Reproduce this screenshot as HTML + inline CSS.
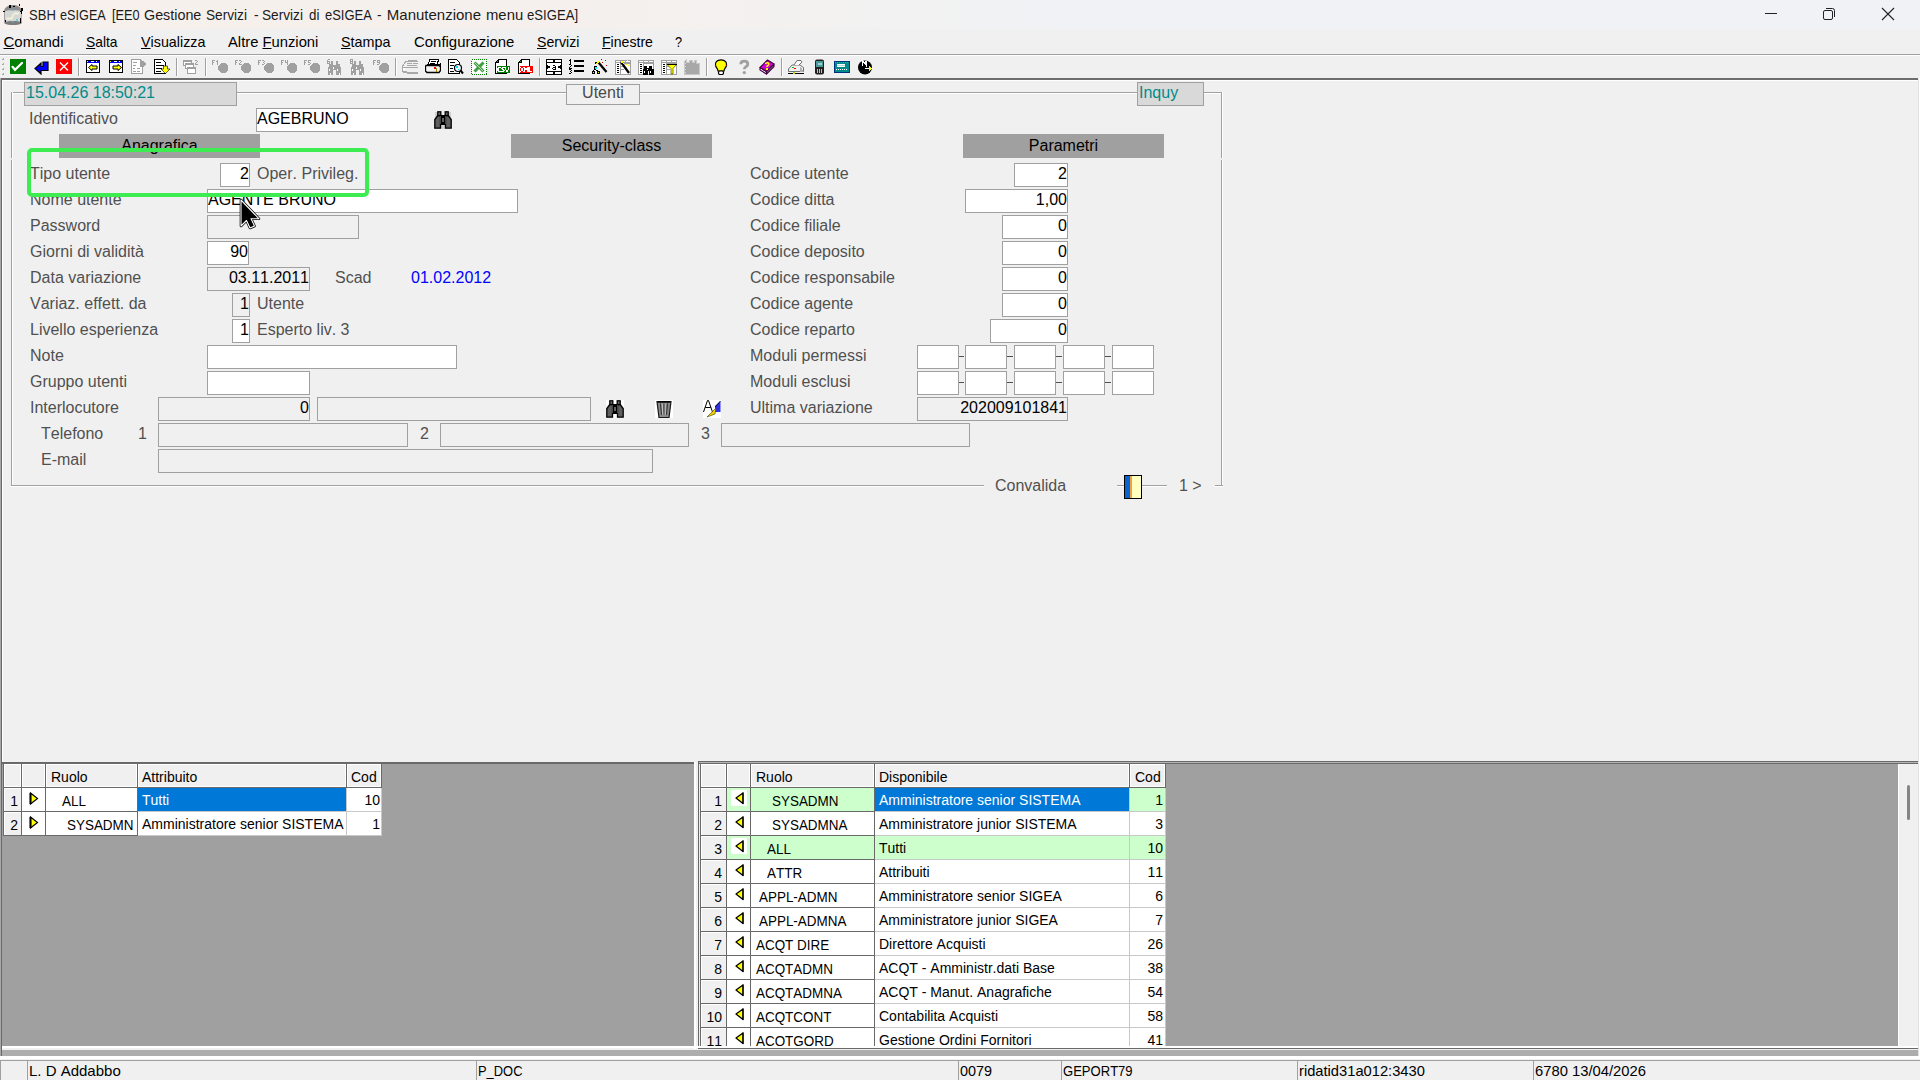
<!DOCTYPE html>
<html><head><meta charset="utf-8"><title>SBH eSIGEA</title>
<style>
html,body{margin:0;padding:0;}
body{width:1920px;height:1080px;overflow:hidden;position:relative;background:#f0f0f0;font-family:"Liberation Sans",sans-serif;}
.t{position:absolute;white-space:pre;line-height:normal;font-kerning:none;font-variant-ligatures:none;}
.b{position:absolute;box-sizing:border-box;}
u{text-decoration:underline;text-decoration-thickness:1px;text-underline-offset:1px;}
</style></head><body>
<div class="b" style="left:0;top:0;width:1920px;height:29px;background:linear-gradient(90deg,#f7f0ec 0%,#f5f0ed 30%,#f2f2f2 47%,#f1f2f6 58%,#f1f2f6 100%);"></div><svg class="b" style="left:2px;top:3px;" width="22" height="22" viewBox="0 0 22 22" shape-rendering="crispEdges"><g shape-rendering="geometricPrecision">
<path d="M2 8.5 C2.5 4.5 6 2 11 2 C16 2 19.5 4.5 20 8.5 V19.5 C19 22.5 3 22.5 2 19.5 Z" fill="#d6d6d6"/>
<path d="M2 8.5 C2.5 4.5 6 2 11 2 C16 2 19.5 4.5 20 8.5 C17 6.8 5 6.8 2 8.5 Z" fill="#8c8c8c"/>
<path d="M2.5 19 C7 17.5 15 17.5 19.5 19 V20.5 C15 22.5 7 22.5 2.5 20.5 Z" fill="#7c7c7c"/>
<path d="M2.5 9 V19" stroke="#a0a0a0" stroke-width="1"/><path d="M19.5 9 V19" stroke="#b0b0b0" stroke-width="1"/>
<path d="M12 10.5 H17 M11.5 11 L10 15 M4.5 15.5 H10.5" stroke="#f2f2d6" stroke-width="1.8" fill="none"/>
<rect x="9" y="6.5" width="3" height="1" fill="#4fb8c8"/><rect x="9" y="18.5" width="3" height="1" fill="#4fb8c8"/><rect x="14" y="16" width="2" height="2" fill="#7cc8d0"/>
</g><g fill="#000"><rect x="7" y="2" width="1.5" height="2.5"/><rect x="11" y="2.5" width="2" height="1.5"/><rect x="16.5" y="1" width="1.5" height="1.5"/><rect x="1" y="7.5" width="2" height="1.5"/><rect x="18" y="7.5" width="2" height="1.5"/><rect x="19" y="4.5" width="1.5" height="3"/><rect x="18.5" y="9" width="1.5" height="2"/><rect x="2.5" y="17" width="1.5" height="1.5"/><rect x="17.5" y="15" width="1.5" height="2.5"/><rect x="17.5" y="18" width="1.5" height="2"/></g></svg><div class="t " style="left:28.7px;top:6.42px;font-size:15px;color:#1b1b1b;transform:scaleX(0.87);transform-origin:0 0;">SBH</div><div class="t " style="left:60.199999999999996px;top:6.42px;font-size:15px;color:#1b1b1b;transform:scaleX(0.845);transform-origin:0 0;">eSIGEA</div><div class="t " style="left:112.0px;top:6.42px;font-size:15px;color:#1b1b1b;transform:scaleX(0.85);transform-origin:0 0;">[EE0</div><div class="t " style="left:143.5px;top:6.42px;font-size:15px;color:#1b1b1b;transform:scaleX(0.955);transform-origin:0 0;">Gestione</div><div class="t " style="left:206.0px;top:6.42px;font-size:15px;color:#1b1b1b;transform:scaleX(0.91);transform-origin:0 0;">Servizi</div><div class="t " style="left:253.70000000000002px;top:6.42px;font-size:15px;color:#1b1b1b;transform:scaleX(0.92);transform-origin:0 0;">-</div><div class="t " style="left:262.3px;top:6.42px;font-size:15px;color:#1b1b1b;transform:scaleX(0.91);transform-origin:0 0;">Servizi</div><div class="t " style="left:308.5px;top:6.42px;font-size:15px;color:#1b1b1b;transform:scaleX(0.89);transform-origin:0 0;">di</div><div class="t " style="left:325.1px;top:6.42px;font-size:15px;color:#1b1b1b;transform:scaleX(0.865);transform-origin:0 0;">eSIGEA</div><div class="t " style="left:377.3px;top:6.42px;font-size:15px;color:#1b1b1b;transform:scaleX(0.92);transform-origin:0 0;">-</div><div class="t " style="left:386.8px;top:6.42px;font-size:15px;color:#1b1b1b;transform:scaleX(1.0);transform-origin:0 0;">Manutenzione</div><div class="t " style="left:486.0px;top:6.42px;font-size:15px;color:#1b1b1b;transform:scaleX(0.99);transform-origin:0 0;">menu</div><div class="t " style="left:527.3px;top:6.42px;font-size:15px;color:#1b1b1b;transform:scaleX(0.875);transform-origin:0 0;">eSIGEA]</div><div class="b" style="left:1765px;top:13px;width:12px;height:1px;background:#222;"></div><svg class="b" style="left:1822px;top:7px;" width="14" height="14" viewBox="0 0 14 14" shape-rendering="crispEdges"><g shape-rendering="geometricPrecision" fill="none" stroke="#222" stroke-width="1"><rect x="1.5" y="3.5" width="9" height="9" rx="1.5"/><path d="M4 1.5 H10.5 Q12.5 1.5 12.5 3.5 V10"/></g></svg><svg class="b" style="left:1881px;top:7px;" width="14" height="14" viewBox="0 0 14 14" shape-rendering="crispEdges"><g shape-rendering="geometricPrecision" stroke="#222" stroke-width="1.1"><path d="M1 1 L13 13 M13 1 L1 13"/></g></svg><div class="t " style="left:3.5px;top:33.42px;font-size:15px;color:#000;transform:scaleX(1.0);transform-origin:0 0;"><u>C</u>omandi</div><div class="t " style="left:85.5px;top:33.42px;font-size:15px;color:#000;transform:scaleX(0.92);transform-origin:0 0;"><u>S</u>alta</div><div class="t " style="left:140.5px;top:33.42px;font-size:15px;color:#000;transform:scaleX(0.954);transform-origin:0 0;"><u>V</u>isualizza</div><div class="t " style="left:227.5px;top:33.42px;font-size:15px;color:#000;transform:scaleX(0.985);transform-origin:0 0;">Altre <u>F</u>unzioni</div><div class="t " style="left:340.5px;top:33.42px;font-size:15px;color:#000;transform:scaleX(0.955);transform-origin:0 0;"><u>S</u>tampa</div><div class="t " style="left:413.5px;top:33.42px;font-size:15px;color:#000;transform:scaleX(0.995);transform-origin:0 0;">Confi<u>g</u>urazione</div><div class="t " style="left:536.5px;top:33.42px;font-size:15px;color:#000;transform:scaleX(0.94);transform-origin:0 0;"><u>S</u>ervizi</div><div class="t " style="left:601.5px;top:33.42px;font-size:15px;color:#000;transform:scaleX(0.94);transform-origin:0 0;"><u>F</u>inestre</div><div class="t " style="left:674.5px;top:33.42px;font-size:15px;color:#000;transform:scaleX(0.85);transform-origin:0 0;">?</div><div class="b" style="left:0px;top:54px;width:1920px;height:1px;background:#a0a0a0;"></div><div class="b" style="left:0px;top:55px;width:1920px;height:1px;background:#ffffff;"></div><div class="b" style="left:3px;top:58px;width:1px;height:1px;background:#a8a8a8;"></div><div class="b" style="left:2px;top:59px;width:2px;height:1px;background:#a8a8a8;"></div><div class="b" style="left:3px;top:63px;width:1px;height:1px;background:#a8a8a8;"></div><div class="b" style="left:2px;top:64px;width:2px;height:1px;background:#a8a8a8;"></div><div class="b" style="left:3px;top:68px;width:1px;height:1px;background:#a8a8a8;"></div><div class="b" style="left:2px;top:69px;width:2px;height:1px;background:#a8a8a8;"></div><div class="b" style="left:3px;top:73px;width:1px;height:1px;background:#a8a8a8;"></div><div class="b" style="left:2px;top:74px;width:2px;height:1px;background:#a8a8a8;"></div><div class="b" style="left:78px;top:58px;width:1px;height:18px;background:#a0a0a0;"></div><div class="b" style="left:79px;top:58px;width:1px;height:18px;background:#ffffff;"></div><div class="b" style="left:176px;top:58px;width:1px;height:18px;background:#a0a0a0;"></div><div class="b" style="left:177px;top:58px;width:1px;height:18px;background:#ffffff;"></div><div class="b" style="left:205px;top:58px;width:1px;height:18px;background:#a0a0a0;"></div><div class="b" style="left:206px;top:58px;width:1px;height:18px;background:#ffffff;"></div><div class="b" style="left:395px;top:58px;width:1px;height:18px;background:#a0a0a0;"></div><div class="b" style="left:396px;top:58px;width:1px;height:18px;background:#ffffff;"></div><div class="b" style="left:539px;top:58px;width:1px;height:18px;background:#a0a0a0;"></div><div class="b" style="left:540px;top:58px;width:1px;height:18px;background:#ffffff;"></div><div class="b" style="left:706px;top:58px;width:1px;height:18px;background:#a0a0a0;"></div><div class="b" style="left:707px;top:58px;width:1px;height:18px;background:#ffffff;"></div><div class="b" style="left:781px;top:58px;width:1px;height:18px;background:#a0a0a0;"></div><div class="b" style="left:782px;top:58px;width:1px;height:18px;background:#ffffff;"></div><svg class="b" style="left:10px;top:59px;" width="16" height="16" viewBox="0 0 16 16" shape-rendering="crispEdges"><rect x="0" y="0" width="16" height="15" fill="#008000"/><path d="M2.5 7.8 L5 10.8 L12 4" stroke="#fff" stroke-width="2.2" fill="none" stroke-linecap="round" shape-rendering="geometricPrecision"/></svg><svg class="b" style="left:33px;top:59px;" width="16" height="16" viewBox="0 0 16 16" shape-rendering="crispEdges"><path d="M15 3 H10 V7.5 H8 V4 L2 9.5 L8 15 V11.5 H15 Z" fill="#0000ff" stroke="#000" stroke-width="1.2" stroke-linejoin="miter" shape-rendering="geometricPrecision"/></svg><svg class="b" style="left:56px;top:59px;" width="16" height="16" viewBox="0 0 16 16" shape-rendering="crispEdges"><rect x="0" y="0" width="16" height="15" fill="#ff0000"/><path d="M4 3.5 L12 11.5 M12 3.5 L4 11.5" stroke="#fff" stroke-width="1.4" shape-rendering="geometricPrecision"/></svg><svg class="b" style="left:85px;top:59px;" width="16" height="16" viewBox="0 0 16 16" shape-rendering="crispEdges"><rect x="1.5" y="1.5" width="13" height="12" fill="#fff" stroke="#000" stroke-width="1.3"/><rect x="2" y="2" width="12" height="2" fill="#0000ff"/><rect x="2" y="2" width="1" height="1" fill="#ffff00"/><rect x="6" y="2" width="3" height="1" fill="#fff"/><rect x="11" y="2" width="1" height="1" fill="#fff"/><path d="M3.5 8.5 L7 5.5 V7 H12 V10 H7 V11.5 Z" fill="#ffff00" stroke="#000" stroke-width="1" shape-rendering="geometricPrecision"/></svg><svg class="b" style="left:108px;top:59px;" width="16" height="16" viewBox="0 0 16 16" shape-rendering="crispEdges"><rect x="1.5" y="1.5" width="13" height="12" fill="#fff" stroke="#000" stroke-width="1.3"/><rect x="2" y="2" width="12" height="2" fill="#0000ff"/><rect x="2" y="2" width="1" height="1" fill="#ffff00"/><rect x="6" y="2" width="3" height="1" fill="#fff"/><rect x="11" y="2" width="1" height="1" fill="#fff"/><path d="M13.5 8.5 L10 5.5 V7 H5 V10 H10 V11.5 Z" fill="#ffff00" stroke="#000" stroke-width="1" shape-rendering="geometricPrecision"/></svg><svg class="b" style="left:131px;top:59px;" width="16" height="16" viewBox="0 0 16 16" shape-rendering="crispEdges"><path d="M0.5 0.5 H9 L11.5 3 V14.5 H0.5 Z" fill="#fff" stroke="#a0a0a0"/><path d="M2 3.5H6 M2 6.5H5 M2 9.5H4 M6 9.5H9 M2 12.5H5 M6 12.5H9" stroke="#a0a0a0"/><path d="M9 2 H12 L15.5 5 L12 8 H9 Z" fill="#a0a0a0"/></svg><svg class="b" style="left:154px;top:59px;" width="16" height="16" viewBox="0 0 16 16" shape-rendering="crispEdges"><path d="M0.5 0.5 H8.5 L11.5 3.5 V14.5 H0.5 Z" fill="#fff" stroke="#000" stroke-width="1.2"/><path d="M2 3.5H7 M2 6.5H10 M2 9.5H8 M2 12.5H7" stroke="#000"/><path d="M9.5 7 H13.5 V10 H16 L11.5 14.5 L7 10 H9.5 Z" fill="#ffff00" stroke="#000" stroke-width="0.6" shape-rendering="geometricPrecision"/></svg><svg class="b" style="left:183px;top:59px;" width="16" height="16" viewBox="0 0 16 16" shape-rendering="crispEdges"><g fill="#fff" stroke="#a0a0a0"><rect x="0.5" y="1.5" width="8" height="5"/><rect x="2.5" y="4.5" width="8" height="5"/><rect x="4.5" y="8.5" width="8" height="6"/></g><path d="M0.5 2.5H8.5 M2.5 5.5H10.5 M4.5 9.5H12.5" stroke="#a0a0a0"/><rect x="12" y="1" width="1" height="1" fill="#a0a0a0"/><rect x="13" y="1" width="1" height="1" fill="#a0a0a0"/><rect x="14" y="2" width="1" height="1" fill="#a0a0a0"/><rect x="13" y="3" width="1" height="1" fill="#a0a0a0"/><rect x="12" y="4" width="1" height="1" fill="#a0a0a0"/><rect x="12" y="5" width="1" height="1" fill="#a0a0a0"/><rect x="13" y="5" width="1" height="1" fill="#a0a0a0"/><rect x="14" y="5" width="1" height="1" fill="#a0a0a0"/></svg><svg class="b" style="left:212px;top:59px;" width="16" height="16" viewBox="0 0 16 16" shape-rendering="crispEdges"><rect x="0" y="1" width="1" height="1" fill="#a0a0a0"/><rect x="1" y="1" width="1" height="1" fill="#a0a0a0"/><rect x="2" y="1" width="1" height="1" fill="#a0a0a0"/><rect x="0" y="2" width="1" height="1" fill="#a0a0a0"/><rect x="0" y="3" width="1" height="1" fill="#a0a0a0"/><rect x="1" y="3" width="1" height="1" fill="#a0a0a0"/><rect x="0" y="4" width="1" height="1" fill="#a0a0a0"/><rect x="0" y="5" width="1" height="1" fill="#a0a0a0"/><rect x="5" y="1" width="1" height="1" fill="#a0a0a0"/><rect x="4" y="2" width="1" height="1" fill="#a0a0a0"/><rect x="5" y="2" width="1" height="1" fill="#a0a0a0"/><rect x="5" y="3" width="1" height="1" fill="#a0a0a0"/><rect x="5" y="4" width="1" height="1" fill="#a0a0a0"/><rect x="5" y="5" width="1" height="1" fill="#a0a0a0"/><path d="M9 4 H13 L16 7 V11 L13 14 H9 L6 11 V7 Z" fill="#a0a0a0"/></svg><svg class="b" style="left:235px;top:59px;" width="16" height="16" viewBox="0 0 16 16" shape-rendering="crispEdges"><rect x="0" y="1" width="1" height="1" fill="#a0a0a0"/><rect x="1" y="1" width="1" height="1" fill="#a0a0a0"/><rect x="2" y="1" width="1" height="1" fill="#a0a0a0"/><rect x="0" y="2" width="1" height="1" fill="#a0a0a0"/><rect x="0" y="3" width="1" height="1" fill="#a0a0a0"/><rect x="1" y="3" width="1" height="1" fill="#a0a0a0"/><rect x="0" y="4" width="1" height="1" fill="#a0a0a0"/><rect x="0" y="5" width="1" height="1" fill="#a0a0a0"/><rect x="4" y="1" width="1" height="1" fill="#a0a0a0"/><rect x="5" y="1" width="1" height="1" fill="#a0a0a0"/><rect x="6" y="2" width="1" height="1" fill="#a0a0a0"/><rect x="5" y="3" width="1" height="1" fill="#a0a0a0"/><rect x="4" y="4" width="1" height="1" fill="#a0a0a0"/><rect x="4" y="5" width="1" height="1" fill="#a0a0a0"/><rect x="5" y="5" width="1" height="1" fill="#a0a0a0"/><rect x="6" y="5" width="1" height="1" fill="#a0a0a0"/><path d="M9 4 H13 L16 7 V11 L13 14 H9 L6 11 V7 Z" fill="#a0a0a0"/></svg><svg class="b" style="left:258px;top:59px;" width="16" height="16" viewBox="0 0 16 16" shape-rendering="crispEdges"><rect x="0" y="1" width="1" height="1" fill="#a0a0a0"/><rect x="1" y="1" width="1" height="1" fill="#a0a0a0"/><rect x="2" y="1" width="1" height="1" fill="#a0a0a0"/><rect x="0" y="2" width="1" height="1" fill="#a0a0a0"/><rect x="0" y="3" width="1" height="1" fill="#a0a0a0"/><rect x="1" y="3" width="1" height="1" fill="#a0a0a0"/><rect x="0" y="4" width="1" height="1" fill="#a0a0a0"/><rect x="0" y="5" width="1" height="1" fill="#a0a0a0"/><rect x="4" y="1" width="1" height="1" fill="#a0a0a0"/><rect x="5" y="1" width="1" height="1" fill="#a0a0a0"/><rect x="6" y="2" width="1" height="1" fill="#a0a0a0"/><rect x="5" y="3" width="1" height="1" fill="#a0a0a0"/><rect x="6" y="4" width="1" height="1" fill="#a0a0a0"/><rect x="4" y="5" width="1" height="1" fill="#a0a0a0"/><rect x="5" y="5" width="1" height="1" fill="#a0a0a0"/><path d="M9 4 H13 L16 7 V11 L13 14 H9 L6 11 V7 Z" fill="#a0a0a0"/></svg><svg class="b" style="left:281px;top:59px;" width="16" height="16" viewBox="0 0 16 16" shape-rendering="crispEdges"><rect x="0" y="1" width="1" height="1" fill="#a0a0a0"/><rect x="1" y="1" width="1" height="1" fill="#a0a0a0"/><rect x="2" y="1" width="1" height="1" fill="#a0a0a0"/><rect x="0" y="2" width="1" height="1" fill="#a0a0a0"/><rect x="0" y="3" width="1" height="1" fill="#a0a0a0"/><rect x="1" y="3" width="1" height="1" fill="#a0a0a0"/><rect x="0" y="4" width="1" height="1" fill="#a0a0a0"/><rect x="0" y="5" width="1" height="1" fill="#a0a0a0"/><rect x="4" y="1" width="1" height="1" fill="#a0a0a0"/><rect x="6" y="1" width="1" height="1" fill="#a0a0a0"/><rect x="4" y="2" width="1" height="1" fill="#a0a0a0"/><rect x="6" y="2" width="1" height="1" fill="#a0a0a0"/><rect x="4" y="3" width="1" height="1" fill="#a0a0a0"/><rect x="5" y="3" width="1" height="1" fill="#a0a0a0"/><rect x="6" y="3" width="1" height="1" fill="#a0a0a0"/><rect x="6" y="4" width="1" height="1" fill="#a0a0a0"/><rect x="6" y="5" width="1" height="1" fill="#a0a0a0"/><path d="M9 4 H13 L16 7 V11 L13 14 H9 L6 11 V7 Z" fill="#a0a0a0"/></svg><svg class="b" style="left:304px;top:59px;" width="16" height="16" viewBox="0 0 16 16" shape-rendering="crispEdges"><rect x="0" y="1" width="1" height="1" fill="#a0a0a0"/><rect x="1" y="1" width="1" height="1" fill="#a0a0a0"/><rect x="2" y="1" width="1" height="1" fill="#a0a0a0"/><rect x="0" y="2" width="1" height="1" fill="#a0a0a0"/><rect x="0" y="3" width="1" height="1" fill="#a0a0a0"/><rect x="1" y="3" width="1" height="1" fill="#a0a0a0"/><rect x="0" y="4" width="1" height="1" fill="#a0a0a0"/><rect x="0" y="5" width="1" height="1" fill="#a0a0a0"/><rect x="4" y="1" width="1" height="1" fill="#a0a0a0"/><rect x="5" y="1" width="1" height="1" fill="#a0a0a0"/><rect x="6" y="1" width="1" height="1" fill="#a0a0a0"/><rect x="4" y="2" width="1" height="1" fill="#a0a0a0"/><rect x="4" y="3" width="1" height="1" fill="#a0a0a0"/><rect x="5" y="3" width="1" height="1" fill="#a0a0a0"/><rect x="6" y="4" width="1" height="1" fill="#a0a0a0"/><rect x="4" y="5" width="1" height="1" fill="#a0a0a0"/><rect x="5" y="5" width="1" height="1" fill="#a0a0a0"/><path d="M9 4 H13 L16 7 V11 L13 14 H9 L6 11 V7 Z" fill="#a0a0a0"/></svg><svg class="b" style="left:373px;top:59px;" width="16" height="16" viewBox="0 0 16 16" shape-rendering="crispEdges"><rect x="0" y="1" width="1" height="1" fill="#a0a0a0"/><rect x="1" y="1" width="1" height="1" fill="#a0a0a0"/><rect x="2" y="1" width="1" height="1" fill="#a0a0a0"/><rect x="0" y="2" width="1" height="1" fill="#a0a0a0"/><rect x="0" y="3" width="1" height="1" fill="#a0a0a0"/><rect x="1" y="3" width="1" height="1" fill="#a0a0a0"/><rect x="0" y="4" width="1" height="1" fill="#a0a0a0"/><rect x="0" y="5" width="1" height="1" fill="#a0a0a0"/><rect x="4" y="1" width="1" height="1" fill="#a0a0a0"/><rect x="5" y="1" width="1" height="1" fill="#a0a0a0"/><rect x="6" y="1" width="1" height="1" fill="#a0a0a0"/><rect x="4" y="2" width="1" height="1" fill="#a0a0a0"/><rect x="6" y="2" width="1" height="1" fill="#a0a0a0"/><rect x="4" y="3" width="1" height="1" fill="#a0a0a0"/><rect x="5" y="3" width="1" height="1" fill="#a0a0a0"/><rect x="6" y="3" width="1" height="1" fill="#a0a0a0"/><rect x="6" y="4" width="1" height="1" fill="#a0a0a0"/><rect x="4" y="5" width="1" height="1" fill="#a0a0a0"/><rect x="5" y="5" width="1" height="1" fill="#a0a0a0"/><path d="M9 4 H13 L16 7 V11 L13 14 H9 L6 11 V7 Z" fill="#a0a0a0"/></svg><svg class="b" style="left:327px;top:59px;" width="16" height="16" viewBox="0 0 16 16" shape-rendering="crispEdges"><rect x="1" y="0" width="1" height="1" fill="#a0a0a0"/><rect x="2" y="0" width="1" height="1" fill="#a0a0a0"/><rect x="0" y="1" width="1" height="1" fill="#a0a0a0"/><rect x="0" y="2" width="1" height="1" fill="#a0a0a0"/><rect x="1" y="2" width="1" height="1" fill="#a0a0a0"/><rect x="2" y="2" width="1" height="1" fill="#a0a0a0"/><rect x="0" y="3" width="1" height="1" fill="#a0a0a0"/><rect x="2" y="3" width="1" height="1" fill="#a0a0a0"/><rect x="0" y="4" width="1" height="1" fill="#a0a0a0"/><rect x="1" y="4" width="1" height="1" fill="#a0a0a0"/><rect x="2" y="4" width="1" height="1" fill="#a0a0a0"/><g fill="#a0a0a0"><rect x="1" y="8" width="5" height="8"/><rect x="2" y="5" width="4" height="3"/><rect x="4" y="2" width="2" height="3"/><rect x="9" y="8" width="5" height="8"/><rect x="9" y="5" width="4" height="3"/><rect x="9" y="2" width="2" height="3"/><rect x="6" y="6" width="3" height="5"/></g><g fill="#fff"><rect x="2" y="10" width="1" height="2"/><rect x="6" y="8" width="1" height="2"/><rect x="10" y="10" width="1" height="2"/><rect x="3" y="14" width="1" height="2"/><rect x="12" y="14" width="1" height="2"/><rect x="5" y="3" width="0" height="0"/></g></svg><svg class="b" style="left:350px;top:59px;" width="16" height="16" viewBox="0 0 16 16" shape-rendering="crispEdges"><rect x="0" y="0" width="1" height="1" fill="#a0a0a0"/><rect x="1" y="0" width="1" height="1" fill="#a0a0a0"/><rect x="2" y="0" width="1" height="1" fill="#a0a0a0"/><rect x="0" y="1" width="1" height="1" fill="#a0a0a0"/><rect x="2" y="1" width="1" height="1" fill="#a0a0a0"/><rect x="0" y="2" width="1" height="1" fill="#a0a0a0"/><rect x="1" y="2" width="1" height="1" fill="#a0a0a0"/><rect x="2" y="2" width="1" height="1" fill="#a0a0a0"/><rect x="0" y="3" width="1" height="1" fill="#a0a0a0"/><rect x="2" y="3" width="1" height="1" fill="#a0a0a0"/><rect x="0" y="4" width="1" height="1" fill="#a0a0a0"/><rect x="1" y="4" width="1" height="1" fill="#a0a0a0"/><rect x="2" y="4" width="1" height="1" fill="#a0a0a0"/><g fill="#a0a0a0"><rect x="1" y="8" width="5" height="8"/><rect x="2" y="5" width="4" height="3"/><rect x="4" y="2" width="2" height="3"/><rect x="9" y="8" width="5" height="8"/><rect x="9" y="5" width="4" height="3"/><rect x="9" y="2" width="2" height="3"/><rect x="6" y="6" width="3" height="5"/></g><g fill="#fff"><rect x="2" y="10" width="1" height="2"/><rect x="6" y="8" width="1" height="2"/><rect x="10" y="10" width="1" height="2"/><rect x="3" y="14" width="1" height="2"/><rect x="12" y="14" width="1" height="2"/><rect x="5" y="3" width="0" height="0"/></g></svg><svg class="b" style="left:402px;top:59px;" width="16" height="16" viewBox="0 0 16 16" shape-rendering="crispEdges"><path d="M0 8 L4 2 H16" fill="none" stroke="#a8a8a8"/><g fill="#a8a8a8"><rect x="6" y="1" width="9" height="1"/><rect x="5" y="4" width="5" height="1"/><rect x="11" y="4" width="5" height="1"/><rect x="5" y="6" width="10" height="1"/><rect x="0" y="8" width="8" height="1"/><rect x="0" y="9" width="1" height="4"/><rect x="1" y="12" width="4" height="2"/><rect x="5" y="13" width="11" height="2"/><rect x="8" y="8" width="8" height="1"/></g><rect x="1" y="9" width="2" height="2" fill="#fff"/></svg><svg class="b" style="left:425px;top:59px;" width="16" height="16" viewBox="0 0 16 16" shape-rendering="crispEdges"><path d="M5 0.5 H13.5 L12 5.5 H3 Z" fill="#fff" stroke="#000" stroke-width="1.2"/><path d="M6 2.5H11 M5 4.5H10" stroke="#000"/><path d="M1 6.5 H14 L15.5 8 V11.5 L14 13.5 H2 L0.5 12 V7.5 Z" fill="#f4f4f4" stroke="#000" stroke-width="1.3" shape-rendering="geometricPrecision"/><rect x="9" y="8" width="2" height="2" fill="#f00"/><rect x="11" y="9" width="1" height="4" fill="#998800"/><path d="M12 6.5 L15 5 V8" fill="none" stroke="#000"/></svg><svg class="b" style="left:448px;top:59px;" width="16" height="16" viewBox="0 0 16 16" shape-rendering="crispEdges"><path d="M0.5 0.5 H8.5 L11.5 3.5 V14.5 H0.5 Z" fill="#fff" stroke="#000" stroke-width="1.2"/><path d="M2 3.5H7 M2 6.5H6 M2 9.5H5 M2 12.5H6" stroke="#000"/><circle cx="10" cy="9" r="3.5" fill="#f4fcfc" stroke="#000" stroke-width="1.2" shape-rendering="geometricPrecision"/><rect x="8" y="7" width="2" height="2" fill="#00e0ff"/><rect x="10" y="10" width="1" height="1" fill="#00e0ff"/><path d="M12.5 11.5 L15 14.5" stroke="#000" stroke-width="2" shape-rendering="geometricPrecision"/></svg><svg class="b" style="left:471px;top:59px;" width="16" height="16" viewBox="0 0 16 16" shape-rendering="crispEdges"><rect x="0.5" y="0.5" width="15" height="15" fill="#fff" stroke="#008000" stroke-dasharray="1 1"/><path d="M3.5 3.5 L12.5 12.5 M12.5 3.5 L3.5 12.5" stroke="#3f9f3f" stroke-width="3" shape-rendering="geometricPrecision"/><path d="M4 4 L12 12" stroke="#d8f0d8" stroke-width="0.8" shape-rendering="geometricPrecision"/></svg><svg class="b" style="left:494px;top:59px;" width="16" height="16" viewBox="0 0 16 16" shape-rendering="crispEdges"><path d="M4.5 0.5 H12.5 V14.5 H1.5 V3.5 Z" fill="#fff" stroke="#000" stroke-width="1.2"/><path d="M1.5 3.5 H4.5 V0.5" fill="none" stroke="#000"/><rect x="3" y="2" width="1" height="1" fill="#0a0"/><rect x="3" y="7" width="13" height="7" fill="#008000"/><rect x="4" y="8" width="1" height="1" fill="#fff"/><rect x="5" y="8" width="1" height="1" fill="#fff"/><rect x="6" y="8" width="1" height="1" fill="#fff"/><rect x="3" y="9" width="1" height="1" fill="#fff"/><rect x="4" y="9" width="1" height="1" fill="#fff"/><rect x="3" y="10" width="1" height="1" fill="#fff"/><rect x="4" y="10" width="1" height="1" fill="#fff"/><rect x="3" y="11" width="1" height="1" fill="#fff"/><rect x="4" y="11" width="1" height="1" fill="#fff"/><rect x="4" y="12" width="1" height="1" fill="#fff"/><rect x="5" y="12" width="1" height="1" fill="#fff"/><rect x="6" y="12" width="1" height="1" fill="#fff"/><rect x="8" y="8" width="1" height="1" fill="#fff"/><rect x="9" y="8" width="1" height="1" fill="#fff"/><rect x="10" y="8" width="1" height="1" fill="#fff"/><rect x="7" y="9" width="1" height="1" fill="#fff"/><rect x="8" y="9" width="1" height="1" fill="#fff"/><rect x="8" y="10" width="1" height="1" fill="#fff"/><rect x="9" y="10" width="1" height="1" fill="#fff"/><rect x="9" y="11" width="1" height="1" fill="#fff"/><rect x="10" y="11" width="1" height="1" fill="#fff"/><rect x="7" y="12" width="1" height="1" fill="#fff"/><rect x="8" y="12" width="1" height="1" fill="#fff"/><rect x="9" y="12" width="1" height="1" fill="#fff"/><rect x="11" y="8" width="1" height="1" fill="#fff"/><rect x="14" y="8" width="1" height="1" fill="#fff"/><rect x="11" y="9" width="1" height="1" fill="#fff"/><rect x="14" y="9" width="1" height="1" fill="#fff"/><rect x="11" y="10" width="1" height="1" fill="#fff"/><rect x="14" y="10" width="1" height="1" fill="#fff"/><rect x="12" y="11" width="1" height="1" fill="#fff"/><rect x="13" y="11" width="1" height="1" fill="#fff"/><rect x="12" y="12" width="1" height="1" fill="#fff"/><rect x="13" y="12" width="1" height="1" fill="#fff"/></svg><svg class="b" style="left:517px;top:59px;" width="16" height="16" viewBox="0 0 16 16" shape-rendering="crispEdges"><path d="M4.5 0.5 H12.5 V14.5 H1.5 V3.5 Z" fill="#fff" stroke="#000" stroke-width="1.2"/><path d="M1.5 3.5 H4.5 V0.5" fill="none" stroke="#000"/><rect x="3" y="2" width="1" height="1" fill="#0a0"/><rect x="3" y="7" width="13" height="7" fill="#ff0000"/><rect x="3" y="8" width="1" height="1" fill="#fff"/><rect x="6" y="8" width="1" height="1" fill="#fff"/><rect x="4" y="9" width="1" height="1" fill="#fff"/><rect x="5" y="9" width="1" height="1" fill="#fff"/><rect x="4" y="10" width="1" height="1" fill="#fff"/><rect x="5" y="10" width="1" height="1" fill="#fff"/><rect x="4" y="11" width="1" height="1" fill="#fff"/><rect x="5" y="11" width="1" height="1" fill="#fff"/><rect x="3" y="12" width="1" height="1" fill="#fff"/><rect x="6" y="12" width="1" height="1" fill="#fff"/><rect x="7" y="8" width="1" height="1" fill="#fff"/><rect x="10" y="8" width="1" height="1" fill="#fff"/><rect x="7" y="9" width="1" height="1" fill="#fff"/><rect x="8" y="9" width="1" height="1" fill="#fff"/><rect x="9" y="9" width="1" height="1" fill="#fff"/><rect x="10" y="9" width="1" height="1" fill="#fff"/><rect x="7" y="10" width="1" height="1" fill="#fff"/><rect x="8" y="10" width="1" height="1" fill="#fff"/><rect x="9" y="10" width="1" height="1" fill="#fff"/><rect x="10" y="10" width="1" height="1" fill="#fff"/><rect x="7" y="11" width="1" height="1" fill="#fff"/><rect x="10" y="11" width="1" height="1" fill="#fff"/><rect x="7" y="12" width="1" height="1" fill="#fff"/><rect x="10" y="12" width="1" height="1" fill="#fff"/><rect x="11" y="8" width="1" height="1" fill="#fff"/><rect x="12" y="8" width="1" height="1" fill="#fff"/><rect x="11" y="9" width="1" height="1" fill="#fff"/><rect x="12" y="9" width="1" height="1" fill="#fff"/><rect x="11" y="10" width="1" height="1" fill="#fff"/><rect x="12" y="10" width="1" height="1" fill="#fff"/><rect x="11" y="11" width="1" height="1" fill="#fff"/><rect x="12" y="11" width="1" height="1" fill="#fff"/><rect x="11" y="12" width="1" height="1" fill="#fff"/><rect x="12" y="12" width="1" height="1" fill="#fff"/><rect x="13" y="12" width="1" height="1" fill="#fff"/><rect x="14" y="12" width="1" height="1" fill="#fff"/></svg><svg class="b" style="left:546px;top:59px;" width="16" height="16" viewBox="0 0 16 16" shape-rendering="crispEdges"><rect x="0.5" y="0.5" width="15" height="15" fill="#fff" stroke="#000" stroke-width="1.3"/><path d="M0 3.5H16 M0 12.5H16 M8 0V3.5 M8 12.5V16" stroke="#000" stroke-width="1.3"/><path d="M1 8 H4 M12 8 H15" stroke="#000" stroke-width="1.6"/><path d="M1.5 6V10 M14.5 6V10" stroke="#000"/><rect x="7" y="6" width="1" height="1" fill="#000"/><rect x="8" y="6" width="1" height="1" fill="#000"/><rect x="9" y="7" width="1" height="1" fill="#000"/><rect x="7" y="8" width="1" height="1" fill="#000"/><rect x="8" y="8" width="1" height="1" fill="#000"/><rect x="9" y="8" width="1" height="1" fill="#000"/><rect x="6" y="9" width="1" height="1" fill="#000"/><rect x="9" y="9" width="1" height="1" fill="#000"/><rect x="7" y="10" width="1" height="1" fill="#000"/><rect x="8" y="10" width="1" height="1" fill="#000"/><rect x="9" y="10" width="1" height="1" fill="#000"/></svg><svg class="b" style="left:569px;top:59px;" width="16" height="16" viewBox="0 0 16 16" shape-rendering="crispEdges"><rect x="1" y="0" width="1" height="1" fill="#000"/><rect x="0" y="1" width="1" height="1" fill="#000"/><rect x="1" y="1" width="1" height="1" fill="#000"/><rect x="1" y="2" width="1" height="1" fill="#000"/><rect x="1" y="3" width="1" height="1" fill="#000"/><rect x="1" y="4" width="1" height="1" fill="#000"/><rect x="0" y="5" width="1" height="1" fill="#000"/><rect x="1" y="5" width="1" height="1" fill="#000"/><rect x="2" y="6" width="1" height="1" fill="#000"/><rect x="1" y="7" width="1" height="1" fill="#000"/><rect x="0" y="8" width="1" height="1" fill="#000"/><rect x="0" y="9" width="1" height="1" fill="#000"/><rect x="1" y="9" width="1" height="1" fill="#000"/><rect x="2" y="9" width="1" height="1" fill="#000"/><rect x="0" y="10" width="1" height="1" fill="#000"/><rect x="1" y="10" width="1" height="1" fill="#000"/><rect x="2" y="11" width="1" height="1" fill="#000"/><rect x="1" y="12" width="1" height="1" fill="#000"/><rect x="2" y="13" width="1" height="1" fill="#000"/><rect x="0" y="14" width="1" height="1" fill="#000"/><rect x="1" y="14" width="1" height="1" fill="#000"/><rect x="5" y="1" width="10" height="1.5" fill="#000"/><rect x="5" y="6" width="10" height="1.5" fill="#000"/><rect x="5" y="11" width="10" height="1.5" fill="#000"/></svg><svg class="b" style="left:592px;top:59px;" width="16" height="16" viewBox="0 0 16 16" shape-rendering="crispEdges"><path d="M6.5 3.5 L14.5 13" stroke="#000" stroke-width="2.2" shape-rendering="geometricPrecision"/><rect x="5" y="2" width="2" height="2" fill="#ff0"/><path d="M3 8 V10 L0.5 12.5 M3 10 L6 12.5" stroke="#000" fill="none"/><rect x="2" y="7" width="3" height="3" fill="#000"/><rect x="2.5" y="8" width="2" height="2" fill="#0ff"/><rect x="0" y="12" width="3" height="3" fill="#000"/><rect x="1" y="13" width="1" height="1" fill="#ff0"/><rect x="5" y="12" width="3" height="3" fill="#000"/><rect x="6" y="13" width="1" height="1" fill="#ff0"/><rect x="3" y="3" width="2" height="2" fill="#000"/><rect x="3.5" y="3.5" width="1" height="1" fill="#ff0"/><rect x="9" y="0" width="1" height="1" fill="#c00"/><rect x="13" y="1" width="1" height="1" fill="#c00"/><rect x="10" y="3" width="1" height="1" fill="#c00"/><rect x="14" y="6" width="1" height="1" fill="#c00"/></svg><svg class="b" style="left:615px;top:59px;" width="16" height="16" viewBox="0 0 16 16" shape-rendering="crispEdges"><rect x="0.5" y="1.5" width="15" height="14" fill="#fff" stroke="#a0a0a0"/><path d="M0 3.5H16 M5.5 2V16 M10.5 2V4" stroke="#a0a0a0"/><g fill="#000"><rect x="2" y="5" width="2" height="1"/><rect x="2" y="7" width="2" height="1"/><rect x="2" y="9" width="2" height="1"/><rect x="2" y="11" width="2" height="1"/><rect x="2" y="13" width="2" height="1"/></g><path d="M6 4.5H15 M6 7.5H9 M6 10.5H9" stroke="#a0a0a0"/><path d="M6 3 L14 14" stroke="#000" stroke-width="2.2" shape-rendering="geometricPrecision"/><rect x="6" y="2" width="2" height="2" fill="#ff0"/><rect x="8" y="4" width="1" height="1" fill="#ff0"/><rect x="12" y="0" width="1" height="2" fill="#ff0"/><rect x="10" y="5" width="2" height="1" fill="#ff0"/><rect x="13" y="6" width="1" height="1" fill="#ff0"/><rect x="14" y="5" width="1" height="1" fill="#ff0"/></svg><svg class="b" style="left:638px;top:59px;" width="16" height="16" viewBox="0 0 16 16" shape-rendering="crispEdges"><rect x="0.5" y="1.5" width="15" height="14" fill="#fff" stroke="#a0a0a0"/><path d="M0 3.5H16 M5.5 2V16 M10.5 2V4" stroke="#a0a0a0"/><g fill="#000"><rect x="2" y="5" width="2" height="1"/><rect x="2" y="7" width="2" height="1"/><rect x="2" y="9" width="2" height="1"/><rect x="2" y="11" width="2" height="1"/><rect x="2" y="13" width="2" height="1"/></g><path d="M6 4.5H15 M6 7.5H9 M6 10.5H9" stroke="#a0a0a0"/><g fill="#000"><rect x="5" y="10" width="5" height="6"/><rect x="6" y="7" width="3" height="3"/><rect x="11" y="10" width="5" height="6"/><rect x="11" y="7" width="3" height="3"/><rect x="8" y="9" width="4" height="3"/></g><g fill="#fff"><rect x="6" y="12" width="1" height="2"/><rect x="12" y="12" width="1" height="2"/><rect x="9" y="10" width="1" height="1"/></g></svg><svg class="b" style="left:661px;top:59px;" width="16" height="16" viewBox="0 0 16 16" shape-rendering="crispEdges"><rect x="0.5" y="1.5" width="15" height="14" fill="#fff" stroke="#a0a0a0"/><path d="M0 3.5H16 M5.5 2V16 M10.5 2V4" stroke="#a0a0a0"/><g fill="#000"><rect x="2" y="5" width="2" height="1"/><rect x="2" y="7" width="2" height="1"/><rect x="2" y="9" width="2" height="1"/><rect x="2" y="11" width="2" height="1"/><rect x="2" y="13" width="2" height="1"/></g><path d="M6 4.5H15 M6 7.5H9 M6 10.5H9" stroke="#a0a0a0"/><path d="M6 5.5 H15.5 L12 9.5 V15 H10 V9.5 Z" fill="#ffff00" stroke="#606000" stroke-width="0.8" shape-rendering="geometricPrecision"/><rect x="6" y="5" width="10" height="1" fill="#000"/></svg><svg class="b" style="left:684px;top:59px;" width="16" height="16" viewBox="0 0 16 16" shape-rendering="crispEdges"><path d="M0.5 15.5 V3 L2 1 V3 H5 V1 H8 V3 H10 V1 H12 V4 H15.5 V15.5 Z" fill="#a8a8a8" stroke="#c8c8c8"/><g fill="#d8d8d8"><rect x="1" y="4" width="1" height="1"/><rect x="1" y="7" width="1" height="1"/><rect x="1" y="10" width="1" height="1"/><rect x="1" y="13" width="1" height="1"/></g></svg><svg class="b" style="left:713px;top:59px;" width="16" height="16" viewBox="0 0 16 16" shape-rendering="crispEdges"><path d="M8 0.8 C3.5 0.8 2 4 2.5 6.5 C3 8.5 5 10 5 12 H11 C11 10 13 8.5 13.5 6.5 C14 4 12.5 0.8 8 0.8 Z" fill="#ffff00" stroke="#000" stroke-width="1.2" shape-rendering="geometricPrecision"/><rect x="5.5" y="12" width="5" height="3.5" rx="1.5" fill="#fff" stroke="#000" stroke-width="1.2" shape-rendering="geometricPrecision"/><rect x="2" y="6" width="1" height="1" fill="#c00"/><rect x="13" y="6" width="1" height="1" fill="#c00"/></svg><svg class="b" style="left:736px;top:59px;" width="16" height="16" viewBox="0 0 16 16" shape-rendering="crispEdges"><path d="M4.8 5.2 C4.8 1.2 11.8 1.2 11.8 5.2 C11.8 7.8 8.3 7.6 8.3 10.3" fill="none" stroke="#a0a0a0" stroke-width="2.8" shape-rendering="geometricPrecision"/><circle cx="8.3" cy="13.6" r="1.7" fill="#a0a0a0" shape-rendering="geometricPrecision"/></svg><svg class="b" style="left:759px;top:59px;" width="16" height="16" viewBox="0 0 16 16" shape-rendering="crispEdges"><g shape-rendering="geometricPrecision" stroke="#400040" stroke-width="1.1" stroke-linejoin="round"><path d="M1 8.5 L7.5 12.5 L7.5 15 L1 11 Z" fill="#fff"/><path d="M7.5 12.5 L15 5 L15 7.5 L7.5 15 Z" fill="#c8c8c8"/><path d="M1 8.5 L8.5 1 L15 5 L7.5 12.5 Z" fill="#d000d0"/></g><path d="M6.5 5 C7 3 10.5 3.5 9.8 5.5 C9.3 6.8 8 6.6 7.8 8" fill="none" stroke="#ffff00" stroke-width="1.5" shape-rendering="geometricPrecision"/><rect x="7" y="9" width="1.6" height="1.6" fill="#ff0"/></svg><svg class="b" style="left:788px;top:59px;" width="16" height="16" viewBox="0 0 16 16" shape-rendering="crispEdges"><path d="M0.5 10 L4 6 H12 L15.5 8.5 V12.5 H0.5 Z" fill="#f0f0f0" stroke="#707070" shape-rendering="geometricPrecision"/><path d="M12 7 V12.5 H15.5" fill="#b0b0b0"/><path d="M6 6 L9 1.5 H13 L14 3 L11 6" fill="#fff" stroke="#707070" shape-rendering="geometricPrecision"/><rect x="4" y="8" width="2" height="1" fill="#0c0"/><rect x="6" y="9" width="2" height="1" fill="#f00"/><rect x="0" y="14" width="16" height="1" fill="#000"/><rect x="5" y="13" width="2" height="2" fill="#cc0"/></svg><svg class="b" style="left:811px;top:59px;" width="16" height="16" viewBox="0 0 16 16" shape-rendering="crispEdges"><rect x="4" y="0.5" width="9" height="15" rx="2" fill="#202020" shape-rendering="geometricPrecision"/><rect x="5" y="2" width="7" height="6" fill="#4b9a9a"/><rect x="6.5" y="4" width="4" height="2" fill="#a0d0d0"/><path d="M6.5 10V14 M8.5 10V14 M10.5 10V14" stroke="#c0c0c0"/></svg><svg class="b" style="left:834px;top:59px;" width="16" height="16" viewBox="0 0 16 16" shape-rendering="crispEdges"><rect x="0.5" y="2.5" width="15" height="11" fill="#008b8b" stroke="#003080"/><rect x="3" y="5" width="8" height="3" fill="#fff"/><rect x="3" y="6" width="8" height="1" fill="#008b8b" opacity="0.3"/><path d="M2 10.5H14" stroke="#fff" stroke-dasharray="1 1"/><path d="M1 3.5H15" stroke="#00c0c0" stroke-dasharray="1 1"/></svg><svg class="b" style="left:857px;top:59px;" width="16" height="16" viewBox="0 0 16 16" shape-rendering="crispEdges"><circle cx="8" cy="8.5" r="7" fill="#000" shape-rendering="geometricPrecision"/><path d="M5.5 7 V2 L9 6 V1.5" fill="none" stroke="#fff" stroke-width="1.3"/><path d="M8 9.5 H12" stroke="#fff" stroke-width="1.2"/><path d="M12 7 L15.5 9.5 L12 12 Z" fill="#ffff00"/></svg><div class="b" style="left:0px;top:78px;width:1918px;height:1px;background:#6d6d6d;"></div><div class="b" style="left:0px;top:79px;width:1918px;height:1px;background:#6d6d6d;"></div><div class="b" style="left:0px;top:78px;width:1px;height:979px;background:#a8a8a8;"></div><div class="b" style="left:1px;top:78px;width:1px;height:979px;background:#696969;"></div><div class="b" style="left:2px;top:80px;width:1px;height:682px;background:#ffffff;"></div><div class="b" style="left:2px;top:80px;width:1916px;height:1px;background:#ffffff;"></div><div class="b" style="left:1918px;top:79px;width:1px;height:978px;background:#e2e2e2;"></div><div class="b" style="left:1919px;top:78px;width:1px;height:979px;background:#ffffff;"></div><div class="b" style="left:11px;top:92px;width:14px;height:1px;background:#a0a0a0;"></div><div class="b" style="left:11px;top:93px;width:14px;height:1px;background:#ffffff;"></div><div class="b" style="left:236px;top:92px;width:331px;height:1px;background:#a0a0a0;"></div><div class="b" style="left:236px;top:93px;width:331px;height:1px;background:#ffffff;"></div><div class="b" style="left:640px;top:92px;width:498px;height:1px;background:#a0a0a0;"></div><div class="b" style="left:640px;top:93px;width:498px;height:1px;background:#ffffff;"></div><div class="b" style="left:1204px;top:92px;width:18px;height:1px;background:#a0a0a0;"></div><div class="b" style="left:1204px;top:93px;width:18px;height:1px;background:#ffffff;"></div><div class="b" style="left:11px;top:92px;width:1px;height:66px;background:#a0a0a0;"></div><div class="b" style="left:12px;top:92px;width:1px;height:66px;background:#ffffff;"></div><div class="b" style="left:11px;top:160px;width:1px;height:327px;background:#a0a0a0;"></div><div class="b" style="left:12px;top:160px;width:1px;height:327px;background:#ffffff;"></div><div class="b" style="left:1221px;top:92px;width:1px;height:66px;background:#a0a0a0;"></div><div class="b" style="left:1222px;top:92px;width:1px;height:66px;background:#ffffff;"></div><div class="b" style="left:1221px;top:160px;width:1px;height:327px;background:#a0a0a0;"></div><div class="b" style="left:1222px;top:160px;width:1px;height:327px;background:#ffffff;"></div><div class="b" style="left:11px;top:485px;width:973px;height:1px;background:#a0a0a0;"></div><div class="b" style="left:11px;top:486px;width:973px;height:1px;background:#ffffff;"></div><div class="b" style="left:1117px;top:485px;width:8px;height:1px;background:#a0a0a0;"></div><div class="b" style="left:1117px;top:486px;width:8px;height:1px;background:#ffffff;"></div><div class="b" style="left:1142px;top:485px;width:25px;height:1px;background:#a0a0a0;"></div><div class="b" style="left:1142px;top:486px;width:25px;height:1px;background:#ffffff;"></div><div class="b" style="left:1215px;top:485px;width:8px;height:1px;background:#a0a0a0;"></div><div class="b" style="left:1215px;top:486px;width:8px;height:1px;background:#ffffff;"></div><div class="b" style="left:24px;top:82px;width:213px;height:24px;background:#d9d9d9;border:1px solid #a0a0a0;"></div><div class="t " style="left:26px;top:83.52px;font-size:16px;color:#008b8b;">15.04.26 18:50:21</div><div class="b" style="left:566px;top:84px;width:74px;height:21px;background:#f0f0f0;border:1px solid #a0a0a0;"></div><div class="t " style="left:603px;top:83.52px;font-size:16px;color:#4a4a4a;transform:translateX(-50%);">Utenti</div><div class="b" style="left:1137px;top:82px;width:67px;height:24px;background:#d9d9d9;border:1px solid #a0a0a0;"></div><div class="t " style="left:1139px;top:83.52px;font-size:16px;color:#008b8b;">Inquy</div><div class="t " style="left:29px;top:109.52px;font-size:16px;color:#505050;">Identificativo</div><div class="b" style="left:256px;top:108px;width:152px;height:24px;background:#fff;border:1px solid #a0a0a0;"></div><div class="t " style="left:257px;top:109.52px;font-size:16px;color:#000;">AGEBRUNO</div><svg class="b" style="left:434px;top:111px;" width="18" height="18" viewBox="0 0 18 18" shape-rendering="crispEdges"><rect x="1" y="1" width="3" height="6" fill="#cfcfcf"/><rect x="14" y="1" width="3" height="6" fill="#cfcfcf"/><rect x="7" y="14" width="4" height="4" fill="#cfcfcf"/><g stroke="#000" stroke-width="1.3" shape-rendering="geometricPrecision"><path d="M0.8 17.2 V8.5 L3.8 4.5 H6.5 V17.2 Z" fill="#5e5e5e"/><path d="M17.2 17.2 V8.5 L14.2 4.5 H11.5 V17.2 Z" fill="#5e5e5e"/><rect x="3.8" y="0.8" width="3" height="3.7" fill="#6a6a6a"/><rect x="11.2" y="0.8" width="3" height="3.7" fill="#6a6a6a"/></g><rect x="6.5" y="4" width="5" height="10" fill="#000"/><rect x="8.2" y="6.5" width="1.6" height="4.5" fill="#606060"/><path d="M6.5 5 V13 M11.5 5 V13" stroke="#777" stroke-width="0.6"/></svg><svg class="b" style="left:606px;top:400px;" width="18" height="18" viewBox="0 0 18 18" shape-rendering="crispEdges"><rect x="0" y="0" width="18" height="18" fill="#fff"/><g stroke="#000" stroke-width="1.3" shape-rendering="geometricPrecision"><path d="M0.8 17.2 V8.5 L3.8 4.5 H6.5 V17.2 Z" fill="#5e5e5e"/><path d="M17.2 17.2 V8.5 L14.2 4.5 H11.5 V17.2 Z" fill="#5e5e5e"/><rect x="3.8" y="0.8" width="3" height="3.7" fill="#6a6a6a"/><rect x="11.2" y="0.8" width="3" height="3.7" fill="#6a6a6a"/></g><rect x="6.5" y="4" width="5" height="10" fill="#000"/><rect x="8.2" y="6.5" width="1.6" height="4.5" fill="#606060"/><path d="M6.5 5 V13 M11.5 5 V13" stroke="#777" stroke-width="0.6"/></svg><svg class="b" style="left:655px;top:400px;" width="18" height="18" viewBox="0 0 18 18" shape-rendering="crispEdges"><rect x="0" y="0" width="18" height="18" fill="#fff"/><g shape-rendering="geometricPrecision"><path d="M2 1.5 H16 L14 17.5 H4 Z" fill="#8a8a8a" stroke="#1a1a1a" stroke-width="1.2"/><path d="M2.5 2 H15.5" stroke="#000" stroke-width="1.5"/><path d="M5.5 3.5 L6.5 15 M9 3.5 V15 M12.5 3.5 L11.5 15" stroke="#222" stroke-width="0.9"/><path d="M7.2 3.5 L7.8 15 M10.3 3.5 L10.2 15" stroke="#d0d0d0" stroke-width="0.8"/></g></svg><svg class="b" style="left:703px;top:400px;" width="18" height="18" viewBox="0 0 18 18" shape-rendering="crispEdges"><rect x="0" y="0" width="18" height="18" fill="#fff"/><g shape-rendering="geometricPrecision"><path d="M0.5 12 L4.5 0.5 H5.5 L9.5 12 M2.2 7.5 H7.8" fill="none" stroke="#000" stroke-width="1"/><path d="M12 6 L17.5 1 V12 H12 Z" fill="#3030e0"/><path d="M4 17 L10 11 L13 8 L12 14 Z" fill="#f0d000" stroke="#404000" stroke-width="0.6"/><path d="M17.5 1 L12 7" stroke="#000" stroke-width="0.8"/></g></svg><div class="b" style="left:59px;top:134px;width:201px;height:24px;background:#a0a0a0;"></div><div class="t " style="left:159.5px;top:136.52px;font-size:16px;color:#000;transform:translateX(-50%);">Anagrafica</div><div class="b" style="left:511px;top:134px;width:201px;height:24px;background:#a0a0a0;"></div><div class="t " style="left:611.5px;top:136.52px;font-size:16px;color:#000;transform:translateX(-50%);">Security-class</div><div class="b" style="left:963px;top:134px;width:201px;height:24px;background:#a0a0a0;"></div><div class="t " style="left:1063.5px;top:136.52px;font-size:16px;color:#000;transform:translateX(-50%);">Parametri</div><div class="t " style="left:30px;top:164.52px;font-size:16px;color:#505050;">Tipo utente</div><div class="b" style="left:220px;top:163px;width:30px;height:24px;background:#fff;border:1px solid #a0a0a0;"></div><div class="t " style="right:1671px;top:164.52px;font-size:16px;color:#000;">2</div><div class="t " style="left:257px;top:164.52px;font-size:16px;color:#505050;">Oper. Privileg.</div><div class="t " style="left:30px;top:190.52px;font-size:16px;color:#505050;">Nome utente</div><div class="b" style="left:207px;top:189px;width:311px;height:24px;background:#fff;border:1px solid #a0a0a0;"></div><div class="t " style="left:208px;top:190.52px;font-size:16px;color:#000;">AGENTE BRUNO</div><div class="t " style="left:30px;top:216.52px;font-size:16px;color:#505050;">Password</div><div class="b" style="left:207px;top:215px;width:152px;height:24px;background:#f0f0f0;border:1px solid #a0a0a0;"></div><div class="t " style="left:30px;top:242.52px;font-size:16px;color:#505050;">Giorni di validità</div><div class="b" style="left:207px;top:241px;width:42px;height:24px;background:#fff;border:1px solid #a0a0a0;"></div><div class="t " style="right:1672px;top:242.52px;font-size:16px;color:#000;">90</div><div class="t " style="left:30px;top:268.52px;font-size:16px;color:#505050;">Data variazione</div><div class="b" style="left:207px;top:267px;width:103px;height:24px;background:#f0f0f0;border:1px solid #a0a0a0;"></div><div class="t " style="right:1611px;top:268.52px;font-size:16px;color:#000;">03.11.2011</div><div class="t " style="left:335px;top:268.52px;font-size:16px;color:#505050;">Scad</div><div class="t " style="left:411px;top:268.52px;font-size:16px;color:#0000ff;">01.02.2012</div><div class="t " style="left:30px;top:294.52px;font-size:16px;color:#505050;">Variaz. effett. da</div><div class="b" style="left:232px;top:293px;width:18px;height:24px;background:#f0f0f0;border:1px solid #a0a0a0;"></div><div class="t " style="right:1671px;top:294.52px;font-size:16px;color:#000;">1</div><div class="t " style="left:257px;top:294.52px;font-size:16px;color:#505050;">Utente</div><div class="t " style="left:30px;top:320.52px;font-size:16px;color:#505050;">Livello esperienza</div><div class="b" style="left:232px;top:319px;width:18px;height:24px;background:#fff;border:1px solid #a0a0a0;"></div><div class="t " style="right:1671px;top:320.52px;font-size:16px;color:#000;">1</div><div class="t " style="left:257px;top:320.52px;font-size:16px;color:#505050;">Esperto liv. 3</div><div class="t " style="left:30px;top:346.52px;font-size:16px;color:#505050;">Note</div><div class="b" style="left:207px;top:345px;width:250px;height:24px;background:#fff;border:1px solid #a0a0a0;"></div><div class="t " style="left:30px;top:372.52px;font-size:16px;color:#505050;">Gruppo utenti</div><div class="b" style="left:207px;top:371px;width:103px;height:24px;background:#fff;border:1px solid #a0a0a0;"></div><div class="t " style="left:30px;top:398.52px;font-size:16px;color:#505050;">Interlocutore</div><div class="b" style="left:158px;top:397px;width:152px;height:24px;background:#f0f0f0;border:1px solid #a0a0a0;"></div><div class="t " style="right:1611px;top:398.52px;font-size:16px;color:#000;">0</div><div class="b" style="left:317px;top:397px;width:274px;height:24px;background:#f0f0f0;border:1px solid #a0a0a0;"></div><div class="t " style="left:41px;top:424.52px;font-size:16px;color:#505050;">Telefono</div><div class="t " style="left:138px;top:424.52px;font-size:16px;color:#505050;">1</div><div class="b" style="left:158px;top:423px;width:250px;height:24px;background:#f0f0f0;border:1px solid #a0a0a0;"></div><div class="t " style="left:420px;top:424.52px;font-size:16px;color:#505050;">2</div><div class="b" style="left:440px;top:423px;width:249px;height:24px;background:#f0f0f0;border:1px solid #a0a0a0;"></div><div class="t " style="left:701px;top:424.52px;font-size:16px;color:#505050;">3</div><div class="b" style="left:721px;top:423px;width:249px;height:24px;background:#f0f0f0;border:1px solid #a0a0a0;"></div><div class="t " style="left:41px;top:450.52px;font-size:16px;color:#505050;">E-mail</div><div class="b" style="left:158px;top:449px;width:495px;height:24px;background:#f0f0f0;border:1px solid #a0a0a0;"></div><div class="t " style="left:750px;top:164.52px;font-size:16px;color:#505050;">Codice utente</div><div class="b" style="left:1014px;top:163px;width:54px;height:24px;background:#fff;border:1px solid #a0a0a0;"></div><div class="t " style="right:853px;top:164.52px;font-size:16px;color:#000;">2</div><div class="t " style="left:750px;top:190.52px;font-size:16px;color:#505050;">Codice ditta</div><div class="b" style="left:965px;top:189px;width:103px;height:24px;background:#fff;border:1px solid #a0a0a0;"></div><div class="t " style="right:853px;top:190.52px;font-size:16px;color:#000;">1,00</div><div class="t " style="left:750px;top:216.52px;font-size:16px;color:#505050;">Codice filiale</div><div class="b" style="left:1002px;top:215px;width:66px;height:24px;background:#fff;border:1px solid #a0a0a0;"></div><div class="t " style="right:853px;top:216.52px;font-size:16px;color:#000;">0</div><div class="t " style="left:750px;top:242.52px;font-size:16px;color:#505050;">Codice deposito</div><div class="b" style="left:1002px;top:241px;width:66px;height:24px;background:#fff;border:1px solid #a0a0a0;"></div><div class="t " style="right:853px;top:242.52px;font-size:16px;color:#000;">0</div><div class="t " style="left:750px;top:268.52px;font-size:16px;color:#505050;">Codice responsabile</div><div class="b" style="left:1002px;top:267px;width:66px;height:24px;background:#fff;border:1px solid #a0a0a0;"></div><div class="t " style="right:853px;top:268.52px;font-size:16px;color:#000;">0</div><div class="t " style="left:750px;top:294.52px;font-size:16px;color:#505050;">Codice agente</div><div class="b" style="left:1002px;top:293px;width:66px;height:24px;background:#fff;border:1px solid #a0a0a0;"></div><div class="t " style="right:853px;top:294.52px;font-size:16px;color:#000;">0</div><div class="t " style="left:750px;top:320.52px;font-size:16px;color:#505050;">Codice reparto</div><div class="b" style="left:990px;top:319px;width:78px;height:24px;background:#fff;border:1px solid #a0a0a0;"></div><div class="t " style="right:853px;top:320.52px;font-size:16px;color:#000;">0</div><div class="t " style="left:750px;top:346.52px;font-size:16px;color:#505050;">Moduli permessi</div><div class="t " style="left:750px;top:372.52px;font-size:16px;color:#505050;">Moduli esclusi</div><div class="b" style="left:917px;top:345px;width:42px;height:24px;background:#fff;border:1px solid #a0a0a0;"></div><div class="b" style="left:959px;top:356px;width:5px;height:1px;background:#505050;"></div><div class="b" style="left:965px;top:345px;width:42px;height:24px;background:#fff;border:1px solid #a0a0a0;"></div><div class="b" style="left:1007px;top:356px;width:6px;height:1px;background:#505050;"></div><div class="b" style="left:1014px;top:345px;width:42px;height:24px;background:#fff;border:1px solid #a0a0a0;"></div><div class="b" style="left:1056px;top:356px;width:6px;height:1px;background:#505050;"></div><div class="b" style="left:1063px;top:345px;width:42px;height:24px;background:#fff;border:1px solid #a0a0a0;"></div><div class="b" style="left:1105px;top:356px;width:6px;height:1px;background:#505050;"></div><div class="b" style="left:1112px;top:345px;width:42px;height:24px;background:#fff;border:1px solid #a0a0a0;"></div><div class="b" style="left:917px;top:371px;width:42px;height:24px;background:#fff;border:1px solid #a0a0a0;"></div><div class="b" style="left:959px;top:382px;width:5px;height:1px;background:#505050;"></div><div class="b" style="left:965px;top:371px;width:42px;height:24px;background:#fff;border:1px solid #a0a0a0;"></div><div class="b" style="left:1007px;top:382px;width:6px;height:1px;background:#505050;"></div><div class="b" style="left:1014px;top:371px;width:42px;height:24px;background:#fff;border:1px solid #a0a0a0;"></div><div class="b" style="left:1056px;top:382px;width:6px;height:1px;background:#505050;"></div><div class="b" style="left:1063px;top:371px;width:42px;height:24px;background:#fff;border:1px solid #a0a0a0;"></div><div class="b" style="left:1105px;top:382px;width:6px;height:1px;background:#505050;"></div><div class="b" style="left:1112px;top:371px;width:42px;height:24px;background:#fff;border:1px solid #a0a0a0;"></div><div class="t " style="left:750px;top:398.52px;font-size:16px;color:#505050;">Ultima variazione</div><div class="b" style="left:917px;top:397px;width:151px;height:24px;background:#f0f0f0;border:1px solid #a0a0a0;"></div><div class="t " style="right:853px;top:398.52px;font-size:16px;color:#000;">202009101841</div><div class="t " style="left:995px;top:476.52px;font-size:16px;color:#505050;">Convalida</div><svg class="b" style="left:1124px;top:475px;" width="19" height="24" viewBox="0 0 19 24" shape-rendering="crispEdges"><rect x="0.5" y="0.5" width="17" height="23" fill="#ffffc0" stroke="#000"/><rect x="1" y="1" width="5" height="22" fill="#0a64d0"/><rect x="6" y="1" width="2" height="22" fill="#f0a040"/></svg><div class="t " style="left:1179px;top:476.52px;font-size:16px;color:#505050;">1 &gt;</div><div class="b" style="left:27px;top:148px;width:342px;height:49px;border:4px solid #3cec50;border-radius:5px;"></div><svg class="b" style="left:236px;top:196px;" width="28" height="36" viewBox="0 0 28 36" shape-rendering="crispEdges"><g shape-rendering="geometricPrecision" transform="translate(5,4)"><path d="M0 0 V26 L5.5 20.5 L9 28 L13.5 26 L10 18.8 H18 Z" fill="#000" stroke="#000" stroke-width="2.6" stroke-linejoin="round"/><path d="M0 0 V26 L5.5 20.5 L9 28 L13.5 26 L10 18.8 H18 Z" fill="#000" stroke="#fff" stroke-width="1.1" stroke-linejoin="round"/><path d="M1.2 3 V23 L5.8 18.3 L9.6 26 L12 25 L8.4 17.4 H15 Z" fill="#000"/></g></svg><div class="b" style="left:2px;top:762px;width:692px;height:1px;background:#696969;"></div><div class="b" style="left:2px;top:763px;width:692px;height:1px;background:#696969;"></div><div class="b" style="left:698px;top:761px;width:1220px;height:1px;background:#696969;"></div><div class="b" style="left:698px;top:762px;width:1220px;height:1px;background:#b4b4b4;"></div><div class="b" style="left:698px;top:763px;width:1220px;height:1px;background:#696969;"></div><div class="b" style="left:2px;top:764px;width:693px;height:282px;background:#a0a0a0;"></div><div class="b" style="left:694px;top:762px;width:2px;height:287px;background:#ffffff;"></div><div class="b" style="left:696px;top:761px;width:2px;height:288px;background:#f0f0f0;"></div><div class="b" style="left:698px;top:761px;width:1px;height:288px;background:#696969;"></div><div class="b" style="left:700px;top:764px;width:1px;height:283px;background:#696969;"></div><div class="b" style="left:699px;top:764px;width:1px;height:283px;background:#f0f0f0;"></div><div class="b" style="left:701px;top:764px;width:1197px;height:282px;background:#a0a0a0;"></div><div class="b" style="left:2px;top:1046px;width:1916px;height:1px;background:#ffffff;"></div><div class="b" style="left:2px;top:1047px;width:1916px;height:1px;background:#ffffff;"></div><div class="b" style="left:698px;top:1048px;width:1220px;height:1px;background:#696969;"></div><div class="b" style="left:2px;top:1049px;width:1916px;height:1px;background:#f0f0f0;"></div><div class="b" style="left:2px;top:1050px;width:1916px;height:6px;background:#adadad;"></div><div class="b" style="left:0px;top:1056px;width:1920px;height:3px;background:#ffffff;"></div><div class="b" style="left:0px;top:1059px;width:1920px;height:1px;background:#f0f0f0;"></div><div class="b" style="left:0px;top:1060px;width:1920px;height:1px;background:#a0a0a0;"></div><div class="b" style="left:1898px;top:764px;width:20px;height:282px;background:#f0f0f0;"></div><div class="b" style="left:1898px;top:764px;width:1px;height:282px;background:#ffffff;"></div><div class="b" style="left:1907px;top:785px;width:3px;height:35px;background:#858585;border-radius:2px;"></div><div class="b" style="left:4px;top:764px;width:17px;height:23px;background:#f0f0f0;border:1px solid #fff;"></div><div class="b" style="left:22px;top:764px;width:23px;height:23px;background:#f0f0f0;border:1px solid #fff;"></div><div class="b" style="left:46px;top:764px;width:91px;height:23px;background:#f0f0f0;border:1px solid #fff;"></div><div class="b" style="left:138px;top:764px;width:208px;height:23px;background:#f0f0f0;border:1px solid #fff;"></div><div class="b" style="left:347px;top:764px;width:34px;height:23px;background:#f0f0f0;border:1px solid #fff;"></div><div class="b" style="left:3px;top:764px;width:1px;height:72px;background:#696969;"></div><div class="b" style="left:21px;top:764px;width:1px;height:24px;background:#696969;"></div><div class="b" style="left:45px;top:764px;width:1px;height:24px;background:#696969;"></div><div class="b" style="left:137px;top:764px;width:1px;height:24px;background:#696969;"></div><div class="b" style="left:346px;top:764px;width:1px;height:24px;background:#696969;"></div><div class="b" style="left:381px;top:764px;width:1px;height:24px;background:#696969;"></div><div class="b" style="left:3px;top:787px;width:379px;height:1px;background:#696969;"></div><div class="t " style="left:51px;top:769.33px;font-size:14px;color:#000;">Ruolo</div><div class="t " style="left:142px;top:769.33px;font-size:14px;color:#000;">Attribuito</div><div class="t " style="left:351px;top:769.33px;font-size:14px;color:#000;">Cod</div><div class="b" style="left:4px;top:788px;width:17px;height:23px;background:#f0f0f0;border-left:1px solid #fff;border-top:1px solid #fff;"></div><div class="b" style="left:22px;top:788px;width:23px;height:23px;background:#fff;"></div><div class="b" style="left:46px;top:788px;width:91px;height:23px;background:#fff;"></div><div class="b" style="left:138px;top:788px;width:208px;height:23px;background:#0078d7;"></div><div class="b" style="left:347px;top:788px;width:35px;height:23px;background:#fff;"></div><div class="b" style="left:4px;top:811px;width:134px;height:1px;background:#696969;"></div><div class="b" style="left:21px;top:788px;width:1px;height:24px;background:#696969;"></div><div class="b" style="left:45px;top:788px;width:1px;height:24px;background:#696969;"></div><div class="b" style="left:137px;top:788px;width:1px;height:24px;background:#696969;"></div><div class="b" style="left:138px;top:811px;width:244px;height:1px;background:#c8c8c8;"></div><div class="b" style="left:346px;top:788px;width:1px;height:23px;background:#c8c8c8;"></div><div class="b" style="left:381px;top:788px;width:1px;height:24px;background:#c8c8c8;"></div><div class="t " style="right:1902px;top:793.33px;font-size:14px;color:#000;">1</div><svg class="b" style="left:29px;top:792px;" width="10" height="14" viewBox="0 0 10 14" shape-rendering="crispEdges"><path d="M1.5 1 L8.5 6.5 L1.5 12 Z" fill="#ffff00" stroke="#000" stroke-width="1.2" stroke-linejoin="miter" shape-rendering="geometricPrecision"/><path d="M1.5 1 V12" stroke="#000" stroke-width="2" shape-rendering="geometricPrecision"/></svg><div class="t " style="left:62px;top:793.33px;font-size:14px;color:#000;transform:scaleX(0.96);transform-origin:0 0;">ALL</div><div class="t " style="left:142px;top:792.33px;font-size:14px;color:#fff;">Tutti</div><div class="t " style="right:1540px;top:792.33px;font-size:14px;color:#000;">10</div><div class="b" style="left:4px;top:812px;width:17px;height:23px;background:#f0f0f0;border-left:1px solid #fff;border-top:1px solid #fff;"></div><div class="b" style="left:22px;top:812px;width:23px;height:23px;background:#fff;"></div><div class="b" style="left:46px;top:812px;width:91px;height:23px;background:#fff;"></div><div class="b" style="left:138px;top:812px;width:208px;height:23px;background:#fff;"></div><div class="b" style="left:347px;top:812px;width:35px;height:23px;background:#fff;"></div><div class="b" style="left:4px;top:835px;width:134px;height:1px;background:#696969;"></div><div class="b" style="left:21px;top:812px;width:1px;height:24px;background:#696969;"></div><div class="b" style="left:45px;top:812px;width:1px;height:24px;background:#696969;"></div><div class="b" style="left:137px;top:812px;width:1px;height:24px;background:#696969;"></div><div class="b" style="left:138px;top:835px;width:244px;height:1px;background:#c8c8c8;"></div><div class="b" style="left:346px;top:812px;width:1px;height:23px;background:#c8c8c8;"></div><div class="b" style="left:381px;top:812px;width:1px;height:24px;background:#c8c8c8;"></div><div class="t " style="right:1902px;top:817.33px;font-size:14px;color:#000;">2</div><svg class="b" style="left:29px;top:816px;" width="10" height="14" viewBox="0 0 10 14" shape-rendering="crispEdges"><path d="M1.5 1 L8.5 6.5 L1.5 12 Z" fill="#ffff00" stroke="#000" stroke-width="1.2" stroke-linejoin="miter" shape-rendering="geometricPrecision"/><path d="M1.5 1 V12" stroke="#000" stroke-width="2" shape-rendering="geometricPrecision"/></svg><div class="t " style="left:67px;top:817.33px;font-size:14px;color:#000;transform:scaleX(0.96);transform-origin:0 0;">SYSADMN</div><div class="t " style="left:142px;top:816.33px;font-size:14px;color:#000;">Amministratore senior SISTEMA</div><div class="t " style="right:1540px;top:816.33px;font-size:14px;color:#000;">1</div><div class="b" style="left:701px;top:764px;width:25px;height:23px;background:#f0f0f0;border:1px solid #fff;"></div><div class="b" style="left:727px;top:764px;width:23px;height:23px;background:#f0f0f0;border:1px solid #fff;"></div><div class="b" style="left:751px;top:764px;width:123px;height:23px;background:#f0f0f0;border:1px solid #fff;"></div><div class="b" style="left:875px;top:764px;width:254px;height:23px;background:#f0f0f0;border:1px solid #fff;"></div><div class="b" style="left:1130px;top:764px;width:35px;height:23px;background:#f0f0f0;border:1px solid #fff;"></div><div class="b" style="left:700px;top:764px;width:1px;height:283px;background:#696969;"></div><div class="b" style="left:726px;top:764px;width:1px;height:24px;background:#696969;"></div><div class="b" style="left:750px;top:764px;width:1px;height:24px;background:#696969;"></div><div class="b" style="left:874px;top:764px;width:1px;height:24px;background:#696969;"></div><div class="b" style="left:1129px;top:764px;width:1px;height:24px;background:#696969;"></div><div class="b" style="left:1165px;top:764px;width:1px;height:24px;background:#696969;"></div><div class="b" style="left:700px;top:787px;width:466px;height:1px;background:#696969;"></div><div class="t " style="left:756px;top:769.33px;font-size:14px;color:#000;">Ruolo</div><div class="t " style="left:879px;top:769.33px;font-size:14px;color:#000;">Disponibile</div><div class="t " style="left:1135px;top:769.33px;font-size:14px;color:#000;">Cod</div><div class="b" style="left:701px;top:788px;width:25px;height:23px;background:#f0f0f0;border-left:1px solid #fff;border-top:1px solid #fff;"></div><div class="b" style="left:727px;top:788px;width:23px;height:23px;background:#ccffcc;"></div><div class="b" style="left:731px;top:790px;width:16px;height:16px;background:#fff;"></div><div class="b" style="left:751px;top:788px;width:123px;height:23px;background:#ccffcc;"></div><div class="b" style="left:875px;top:788px;width:254px;height:23px;background:#0078d7;"></div><div class="b" style="left:1130px;top:788px;width:35px;height:23px;background:#ccffcc;"></div><div class="b" style="left:701px;top:811px;width:174px;height:1px;background:#696969;"></div><div class="b" style="left:875px;top:811px;width:291px;height:1px;background:#c8c8c8;"></div><div class="b" style="left:726px;top:788px;width:1px;height:24px;background:#696969;"></div><div class="b" style="left:750px;top:788px;width:1px;height:24px;background:#696969;"></div><div class="b" style="left:874px;top:788px;width:1px;height:24px;background:#696969;"></div><div class="b" style="left:1129px;top:788px;width:1px;height:23px;background:#c8c8c8;"></div><div class="b" style="left:1165px;top:788px;width:1px;height:24px;background:#c8c8c8;"></div><svg class="b" style="left:735px;top:792px;" width="10" height="14" viewBox="0 0 10 14" shape-rendering="crispEdges"><path d="M8 1 L1 6 L8 11.5 Z" fill="#ffff00" stroke="#000" stroke-width="1.3" stroke-linejoin="round" shape-rendering="geometricPrecision"/><path d="M8 0.5 V12" stroke="#000" stroke-width="1" shape-rendering="geometricPrecision"/></svg><div class="t " style="right:1198px;top:793.33px;font-size:14px;color:#000;">1</div><div class="t " style="left:772px;top:793.33px;font-size:14px;color:#000;transform:scaleX(0.96);transform-origin:0 0;">SYSADMN</div><div class="t " style="left:879px;top:792.33px;font-size:14px;color:#fff;">Amministratore senior SISTEMA</div><div class="t " style="right:757px;top:792.33px;font-size:14px;color:#000;">1</div><div class="b" style="left:701px;top:812px;width:25px;height:23px;background:#f0f0f0;border-left:1px solid #fff;border-top:1px solid #fff;"></div><div class="b" style="left:727px;top:812px;width:23px;height:23px;background:#fff;"></div><div class="b" style="left:751px;top:812px;width:123px;height:23px;background:#fff;"></div><div class="b" style="left:875px;top:812px;width:254px;height:23px;background:#fff;"></div><div class="b" style="left:1130px;top:812px;width:35px;height:23px;background:#fff;"></div><div class="b" style="left:701px;top:835px;width:174px;height:1px;background:#696969;"></div><div class="b" style="left:875px;top:835px;width:291px;height:1px;background:#c8c8c8;"></div><div class="b" style="left:726px;top:812px;width:1px;height:24px;background:#696969;"></div><div class="b" style="left:750px;top:812px;width:1px;height:24px;background:#696969;"></div><div class="b" style="left:874px;top:812px;width:1px;height:24px;background:#696969;"></div><div class="b" style="left:1129px;top:812px;width:1px;height:23px;background:#c8c8c8;"></div><div class="b" style="left:1165px;top:812px;width:1px;height:24px;background:#c8c8c8;"></div><svg class="b" style="left:735px;top:816px;" width="10" height="14" viewBox="0 0 10 14" shape-rendering="crispEdges"><path d="M8 1 L1 6 L8 11.5 Z" fill="#ffff00" stroke="#000" stroke-width="1.3" stroke-linejoin="round" shape-rendering="geometricPrecision"/><path d="M8 0.5 V12" stroke="#000" stroke-width="1" shape-rendering="geometricPrecision"/></svg><div class="t " style="right:1198px;top:817.33px;font-size:14px;color:#000;">2</div><div class="t " style="left:772px;top:817.33px;font-size:14px;color:#000;transform:scaleX(0.96);transform-origin:0 0;">SYSADMNA</div><div class="t " style="left:879px;top:816.33px;font-size:14px;color:#000;">Amministratore junior SISTEMA</div><div class="t " style="right:757px;top:816.33px;font-size:14px;color:#000;">3</div><div class="b" style="left:701px;top:836px;width:25px;height:23px;background:#f0f0f0;border-left:1px solid #fff;border-top:1px solid #fff;"></div><div class="b" style="left:727px;top:836px;width:23px;height:23px;background:#ccffcc;"></div><div class="b" style="left:731px;top:838px;width:16px;height:16px;background:#fff;"></div><div class="b" style="left:751px;top:836px;width:123px;height:23px;background:#ccffcc;"></div><div class="b" style="left:875px;top:836px;width:254px;height:23px;background:#ccffcc;"></div><div class="b" style="left:1130px;top:836px;width:35px;height:23px;background:#ccffcc;"></div><div class="b" style="left:701px;top:859px;width:174px;height:1px;background:#696969;"></div><div class="b" style="left:875px;top:859px;width:291px;height:1px;background:#c8c8c8;"></div><div class="b" style="left:726px;top:836px;width:1px;height:24px;background:#696969;"></div><div class="b" style="left:750px;top:836px;width:1px;height:24px;background:#696969;"></div><div class="b" style="left:874px;top:836px;width:1px;height:24px;background:#696969;"></div><div class="b" style="left:1129px;top:836px;width:1px;height:23px;background:#c8c8c8;"></div><div class="b" style="left:1165px;top:836px;width:1px;height:24px;background:#c8c8c8;"></div><svg class="b" style="left:735px;top:840px;" width="10" height="14" viewBox="0 0 10 14" shape-rendering="crispEdges"><path d="M8 1 L1 6 L8 11.5 Z" fill="#ffff00" stroke="#000" stroke-width="1.3" stroke-linejoin="round" shape-rendering="geometricPrecision"/><path d="M8 0.5 V12" stroke="#000" stroke-width="1" shape-rendering="geometricPrecision"/></svg><div class="t " style="right:1198px;top:841.33px;font-size:14px;color:#000;">3</div><div class="t " style="left:767px;top:841.33px;font-size:14px;color:#000;transform:scaleX(0.96);transform-origin:0 0;">ALL</div><div class="t " style="left:879px;top:840.33px;font-size:14px;color:#000;">Tutti</div><div class="t " style="right:757px;top:840.33px;font-size:14px;color:#000;">10</div><div class="b" style="left:701px;top:860px;width:25px;height:23px;background:#f0f0f0;border-left:1px solid #fff;border-top:1px solid #fff;"></div><div class="b" style="left:727px;top:860px;width:23px;height:23px;background:#fff;"></div><div class="b" style="left:751px;top:860px;width:123px;height:23px;background:#fff;"></div><div class="b" style="left:875px;top:860px;width:254px;height:23px;background:#fff;"></div><div class="b" style="left:1130px;top:860px;width:35px;height:23px;background:#fff;"></div><div class="b" style="left:701px;top:883px;width:174px;height:1px;background:#696969;"></div><div class="b" style="left:875px;top:883px;width:291px;height:1px;background:#c8c8c8;"></div><div class="b" style="left:726px;top:860px;width:1px;height:24px;background:#696969;"></div><div class="b" style="left:750px;top:860px;width:1px;height:24px;background:#696969;"></div><div class="b" style="left:874px;top:860px;width:1px;height:24px;background:#696969;"></div><div class="b" style="left:1129px;top:860px;width:1px;height:23px;background:#c8c8c8;"></div><div class="b" style="left:1165px;top:860px;width:1px;height:24px;background:#c8c8c8;"></div><svg class="b" style="left:735px;top:864px;" width="10" height="14" viewBox="0 0 10 14" shape-rendering="crispEdges"><path d="M8 1 L1 6 L8 11.5 Z" fill="#ffff00" stroke="#000" stroke-width="1.3" stroke-linejoin="round" shape-rendering="geometricPrecision"/><path d="M8 0.5 V12" stroke="#000" stroke-width="1" shape-rendering="geometricPrecision"/></svg><div class="t " style="right:1198px;top:865.33px;font-size:14px;color:#000;">4</div><div class="t " style="left:767px;top:865.33px;font-size:14px;color:#000;transform:scaleX(0.96);transform-origin:0 0;">ATTR</div><div class="t " style="left:879px;top:864.33px;font-size:14px;color:#000;">Attribuiti</div><div class="t " style="right:757px;top:864.33px;font-size:14px;color:#000;">11</div><div class="b" style="left:701px;top:884px;width:25px;height:23px;background:#f0f0f0;border-left:1px solid #fff;border-top:1px solid #fff;"></div><div class="b" style="left:727px;top:884px;width:23px;height:23px;background:#fff;"></div><div class="b" style="left:751px;top:884px;width:123px;height:23px;background:#fff;"></div><div class="b" style="left:875px;top:884px;width:254px;height:23px;background:#fff;"></div><div class="b" style="left:1130px;top:884px;width:35px;height:23px;background:#fff;"></div><div class="b" style="left:701px;top:907px;width:174px;height:1px;background:#696969;"></div><div class="b" style="left:875px;top:907px;width:291px;height:1px;background:#c8c8c8;"></div><div class="b" style="left:726px;top:884px;width:1px;height:24px;background:#696969;"></div><div class="b" style="left:750px;top:884px;width:1px;height:24px;background:#696969;"></div><div class="b" style="left:874px;top:884px;width:1px;height:24px;background:#696969;"></div><div class="b" style="left:1129px;top:884px;width:1px;height:23px;background:#c8c8c8;"></div><div class="b" style="left:1165px;top:884px;width:1px;height:24px;background:#c8c8c8;"></div><svg class="b" style="left:735px;top:888px;" width="10" height="14" viewBox="0 0 10 14" shape-rendering="crispEdges"><path d="M8 1 L1 6 L8 11.5 Z" fill="#ffff00" stroke="#000" stroke-width="1.3" stroke-linejoin="round" shape-rendering="geometricPrecision"/><path d="M8 0.5 V12" stroke="#000" stroke-width="1" shape-rendering="geometricPrecision"/></svg><div class="t " style="right:1198px;top:889.33px;font-size:14px;color:#000;">5</div><div class="t " style="left:759px;top:889.33px;font-size:14px;color:#000;transform:scaleX(0.96);transform-origin:0 0;">APPL-ADMN</div><div class="t " style="left:879px;top:888.33px;font-size:14px;color:#000;">Amministratore senior SIGEA</div><div class="t " style="right:757px;top:888.33px;font-size:14px;color:#000;">6</div><div class="b" style="left:701px;top:908px;width:25px;height:23px;background:#f0f0f0;border-left:1px solid #fff;border-top:1px solid #fff;"></div><div class="b" style="left:727px;top:908px;width:23px;height:23px;background:#fff;"></div><div class="b" style="left:751px;top:908px;width:123px;height:23px;background:#fff;"></div><div class="b" style="left:875px;top:908px;width:254px;height:23px;background:#fff;"></div><div class="b" style="left:1130px;top:908px;width:35px;height:23px;background:#fff;"></div><div class="b" style="left:701px;top:931px;width:174px;height:1px;background:#696969;"></div><div class="b" style="left:875px;top:931px;width:291px;height:1px;background:#c8c8c8;"></div><div class="b" style="left:726px;top:908px;width:1px;height:24px;background:#696969;"></div><div class="b" style="left:750px;top:908px;width:1px;height:24px;background:#696969;"></div><div class="b" style="left:874px;top:908px;width:1px;height:24px;background:#696969;"></div><div class="b" style="left:1129px;top:908px;width:1px;height:23px;background:#c8c8c8;"></div><div class="b" style="left:1165px;top:908px;width:1px;height:24px;background:#c8c8c8;"></div><svg class="b" style="left:735px;top:912px;" width="10" height="14" viewBox="0 0 10 14" shape-rendering="crispEdges"><path d="M8 1 L1 6 L8 11.5 Z" fill="#ffff00" stroke="#000" stroke-width="1.3" stroke-linejoin="round" shape-rendering="geometricPrecision"/><path d="M8 0.5 V12" stroke="#000" stroke-width="1" shape-rendering="geometricPrecision"/></svg><div class="t " style="right:1198px;top:913.33px;font-size:14px;color:#000;">6</div><div class="t " style="left:759px;top:913.33px;font-size:14px;color:#000;transform:scaleX(0.96);transform-origin:0 0;">APPL-ADMNA</div><div class="t " style="left:879px;top:912.33px;font-size:14px;color:#000;">Amministratore junior SIGEA</div><div class="t " style="right:757px;top:912.33px;font-size:14px;color:#000;">7</div><div class="b" style="left:701px;top:932px;width:25px;height:23px;background:#f0f0f0;border-left:1px solid #fff;border-top:1px solid #fff;"></div><div class="b" style="left:727px;top:932px;width:23px;height:23px;background:#fff;"></div><div class="b" style="left:751px;top:932px;width:123px;height:23px;background:#fff;"></div><div class="b" style="left:875px;top:932px;width:254px;height:23px;background:#fff;"></div><div class="b" style="left:1130px;top:932px;width:35px;height:23px;background:#fff;"></div><div class="b" style="left:701px;top:955px;width:174px;height:1px;background:#696969;"></div><div class="b" style="left:875px;top:955px;width:291px;height:1px;background:#c8c8c8;"></div><div class="b" style="left:726px;top:932px;width:1px;height:24px;background:#696969;"></div><div class="b" style="left:750px;top:932px;width:1px;height:24px;background:#696969;"></div><div class="b" style="left:874px;top:932px;width:1px;height:24px;background:#696969;"></div><div class="b" style="left:1129px;top:932px;width:1px;height:23px;background:#c8c8c8;"></div><div class="b" style="left:1165px;top:932px;width:1px;height:24px;background:#c8c8c8;"></div><svg class="b" style="left:735px;top:936px;" width="10" height="14" viewBox="0 0 10 14" shape-rendering="crispEdges"><path d="M8 1 L1 6 L8 11.5 Z" fill="#ffff00" stroke="#000" stroke-width="1.3" stroke-linejoin="round" shape-rendering="geometricPrecision"/><path d="M8 0.5 V12" stroke="#000" stroke-width="1" shape-rendering="geometricPrecision"/></svg><div class="t " style="right:1198px;top:937.33px;font-size:14px;color:#000;">7</div><div class="t " style="left:756px;top:937.33px;font-size:14px;color:#000;transform:scaleX(0.96);transform-origin:0 0;">ACQT DIRE</div><div class="t " style="left:879px;top:936.33px;font-size:14px;color:#000;">Direttore Acquisti</div><div class="t " style="right:757px;top:936.33px;font-size:14px;color:#000;">26</div><div class="b" style="left:701px;top:956px;width:25px;height:23px;background:#f0f0f0;border-left:1px solid #fff;border-top:1px solid #fff;"></div><div class="b" style="left:727px;top:956px;width:23px;height:23px;background:#fff;"></div><div class="b" style="left:751px;top:956px;width:123px;height:23px;background:#fff;"></div><div class="b" style="left:875px;top:956px;width:254px;height:23px;background:#fff;"></div><div class="b" style="left:1130px;top:956px;width:35px;height:23px;background:#fff;"></div><div class="b" style="left:701px;top:979px;width:174px;height:1px;background:#696969;"></div><div class="b" style="left:875px;top:979px;width:291px;height:1px;background:#c8c8c8;"></div><div class="b" style="left:726px;top:956px;width:1px;height:24px;background:#696969;"></div><div class="b" style="left:750px;top:956px;width:1px;height:24px;background:#696969;"></div><div class="b" style="left:874px;top:956px;width:1px;height:24px;background:#696969;"></div><div class="b" style="left:1129px;top:956px;width:1px;height:23px;background:#c8c8c8;"></div><div class="b" style="left:1165px;top:956px;width:1px;height:24px;background:#c8c8c8;"></div><svg class="b" style="left:735px;top:960px;" width="10" height="14" viewBox="0 0 10 14" shape-rendering="crispEdges"><path d="M8 1 L1 6 L8 11.5 Z" fill="#ffff00" stroke="#000" stroke-width="1.3" stroke-linejoin="round" shape-rendering="geometricPrecision"/><path d="M8 0.5 V12" stroke="#000" stroke-width="1" shape-rendering="geometricPrecision"/></svg><div class="t " style="right:1198px;top:961.33px;font-size:14px;color:#000;">8</div><div class="t " style="left:756px;top:961.33px;font-size:14px;color:#000;transform:scaleX(0.96);transform-origin:0 0;">ACQTADMN</div><div class="t " style="left:879px;top:960.33px;font-size:14px;color:#000;">ACQT - Amministr.dati Base</div><div class="t " style="right:757px;top:960.33px;font-size:14px;color:#000;">38</div><div class="b" style="left:701px;top:980px;width:25px;height:23px;background:#f0f0f0;border-left:1px solid #fff;border-top:1px solid #fff;"></div><div class="b" style="left:727px;top:980px;width:23px;height:23px;background:#fff;"></div><div class="b" style="left:751px;top:980px;width:123px;height:23px;background:#fff;"></div><div class="b" style="left:875px;top:980px;width:254px;height:23px;background:#fff;"></div><div class="b" style="left:1130px;top:980px;width:35px;height:23px;background:#fff;"></div><div class="b" style="left:701px;top:1003px;width:174px;height:1px;background:#696969;"></div><div class="b" style="left:875px;top:1003px;width:291px;height:1px;background:#c8c8c8;"></div><div class="b" style="left:726px;top:980px;width:1px;height:24px;background:#696969;"></div><div class="b" style="left:750px;top:980px;width:1px;height:24px;background:#696969;"></div><div class="b" style="left:874px;top:980px;width:1px;height:24px;background:#696969;"></div><div class="b" style="left:1129px;top:980px;width:1px;height:23px;background:#c8c8c8;"></div><div class="b" style="left:1165px;top:980px;width:1px;height:24px;background:#c8c8c8;"></div><svg class="b" style="left:735px;top:984px;" width="10" height="14" viewBox="0 0 10 14" shape-rendering="crispEdges"><path d="M8 1 L1 6 L8 11.5 Z" fill="#ffff00" stroke="#000" stroke-width="1.3" stroke-linejoin="round" shape-rendering="geometricPrecision"/><path d="M8 0.5 V12" stroke="#000" stroke-width="1" shape-rendering="geometricPrecision"/></svg><div class="t " style="right:1198px;top:985.33px;font-size:14px;color:#000;">9</div><div class="t " style="left:756px;top:985.33px;font-size:14px;color:#000;transform:scaleX(0.96);transform-origin:0 0;">ACQTADMNA</div><div class="t " style="left:879px;top:984.33px;font-size:14px;color:#000;">ACQT - Manut. Anagrafiche</div><div class="t " style="right:757px;top:984.33px;font-size:14px;color:#000;">54</div><div class="b" style="left:701px;top:1004px;width:25px;height:23px;background:#f0f0f0;border-left:1px solid #fff;border-top:1px solid #fff;"></div><div class="b" style="left:727px;top:1004px;width:23px;height:23px;background:#fff;"></div><div class="b" style="left:751px;top:1004px;width:123px;height:23px;background:#fff;"></div><div class="b" style="left:875px;top:1004px;width:254px;height:23px;background:#fff;"></div><div class="b" style="left:1130px;top:1004px;width:35px;height:23px;background:#fff;"></div><div class="b" style="left:701px;top:1027px;width:174px;height:1px;background:#696969;"></div><div class="b" style="left:875px;top:1027px;width:291px;height:1px;background:#c8c8c8;"></div><div class="b" style="left:726px;top:1004px;width:1px;height:24px;background:#696969;"></div><div class="b" style="left:750px;top:1004px;width:1px;height:24px;background:#696969;"></div><div class="b" style="left:874px;top:1004px;width:1px;height:24px;background:#696969;"></div><div class="b" style="left:1129px;top:1004px;width:1px;height:23px;background:#c8c8c8;"></div><div class="b" style="left:1165px;top:1004px;width:1px;height:24px;background:#c8c8c8;"></div><svg class="b" style="left:735px;top:1008px;" width="10" height="14" viewBox="0 0 10 14" shape-rendering="crispEdges"><path d="M8 1 L1 6 L8 11.5 Z" fill="#ffff00" stroke="#000" stroke-width="1.3" stroke-linejoin="round" shape-rendering="geometricPrecision"/><path d="M8 0.5 V12" stroke="#000" stroke-width="1" shape-rendering="geometricPrecision"/></svg><div class="t " style="right:1198px;top:1009.33px;font-size:14px;color:#000;">10</div><div class="t " style="left:756px;top:1009.33px;font-size:14px;color:#000;transform:scaleX(0.96);transform-origin:0 0;">ACQTCONT</div><div class="t " style="left:879px;top:1008.33px;font-size:14px;color:#000;">Contabilita Acquisti</div><div class="t " style="right:757px;top:1008.33px;font-size:14px;color:#000;">58</div><div class="b" style="left:701px;top:1028px;width:25px;height:18px;background:#f0f0f0;border-left:1px solid #fff;border-top:1px solid #fff;"></div><div class="b" style="left:727px;top:1028px;width:23px;height:18px;background:#fff;"></div><div class="b" style="left:751px;top:1028px;width:123px;height:18px;background:#fff;"></div><div class="b" style="left:875px;top:1028px;width:254px;height:18px;background:#fff;"></div><div class="b" style="left:1130px;top:1028px;width:35px;height:18px;background:#fff;"></div><div class="b" style="left:726px;top:1028px;width:1px;height:19px;background:#696969;"></div><div class="b" style="left:750px;top:1028px;width:1px;height:19px;background:#696969;"></div><div class="b" style="left:874px;top:1028px;width:1px;height:19px;background:#696969;"></div><div class="b" style="left:1129px;top:1028px;width:1px;height:18px;background:#c8c8c8;"></div><div class="b" style="left:1165px;top:1028px;width:1px;height:19px;background:#c8c8c8;"></div><svg class="b" style="left:735px;top:1032px;" width="10" height="14" viewBox="0 0 10 14" shape-rendering="crispEdges"><path d="M8 1 L1 6 L8 11.5 Z" fill="#ffff00" stroke="#000" stroke-width="1.3" stroke-linejoin="round" shape-rendering="geometricPrecision"/><path d="M8 0.5 V12" stroke="#000" stroke-width="1" shape-rendering="geometricPrecision"/></svg><div class="t " style="right:1198px;top:1033.33px;font-size:14px;color:#000;">11</div><div class="t " style="left:756px;top:1033.33px;font-size:14px;color:#000;transform:scaleX(0.96);transform-origin:0 0;">ACQTGORD</div><div class="t " style="left:879px;top:1032.33px;font-size:14px;color:#000;">Gestione Ordini Fornitori</div><div class="t " style="right:757px;top:1032.33px;font-size:14px;color:#000;">41</div><div class="b" style="left:2px;top:1046px;width:1916px;height:1px;background:#ffffff;"></div><div class="b" style="left:2px;top:1047px;width:1916px;height:1px;background:#ffffff;"></div><div class="b" style="left:698px;top:1048px;width:1220px;height:1px;background:#696969;"></div><div class="b" style="left:701px;top:1046px;width:1197px;height:2px;background:#ffffff;"></div><div class="b" style="left:0px;top:1061px;width:1920px;height:19px;background:#f0f0f0;"></div><div class="b" style="left:0px;top:1060px;width:25px;height:1px;background:#a0a0a0;"></div><div class="b" style="left:0px;top:1060px;width:1px;height:20px;background:#a0a0a0;"></div><div class="b" style="left:27px;top:1060px;width:447px;height:1px;background:#a0a0a0;"></div><div class="b" style="left:27px;top:1060px;width:1px;height:20px;background:#a0a0a0;"></div><div class="t " style="left:29px;top:1062.42px;font-size:15px;color:#000;transform:scaleX(1.0);transform-origin:0 0;">L. D Addabbo</div><div class="b" style="left:476px;top:1060px;width:480px;height:1px;background:#a0a0a0;"></div><div class="b" style="left:476px;top:1060px;width:1px;height:20px;background:#a0a0a0;"></div><div class="t " style="left:478px;top:1062.42px;font-size:15px;color:#000;transform:scaleX(0.86);transform-origin:0 0;">P_DOC</div><div class="b" style="left:958px;top:1060px;width:101px;height:1px;background:#a0a0a0;"></div><div class="b" style="left:958px;top:1060px;width:1px;height:20px;background:#a0a0a0;"></div><div class="t " style="left:960px;top:1062.42px;font-size:15px;color:#000;transform:scaleX(0.96);transform-origin:0 0;">0079</div><div class="b" style="left:1061px;top:1060px;width:234px;height:1px;background:#a0a0a0;"></div><div class="b" style="left:1061px;top:1060px;width:1px;height:20px;background:#a0a0a0;"></div><div class="t " style="left:1063px;top:1062.42px;font-size:15px;color:#000;transform:scaleX(0.87);transform-origin:0 0;">GEPORT79</div><div class="b" style="left:1297px;top:1060px;width:234px;height:1px;background:#a0a0a0;"></div><div class="b" style="left:1297px;top:1060px;width:1px;height:20px;background:#a0a0a0;"></div><div class="t " style="left:1299px;top:1062.42px;font-size:15px;color:#000;transform:scaleX(0.98);transform-origin:0 0;">ridatid31a012:3430</div><div class="b" style="left:1533px;top:1060px;width:386px;height:1px;background:#a0a0a0;"></div><div class="b" style="left:1533px;top:1060px;width:1px;height:20px;background:#a0a0a0;"></div><div class="t " style="left:1535px;top:1062.42px;font-size:15px;color:#000;transform:scaleX(0.985);transform-origin:0 0;">6780 13/04/2026</div>
</body></html>
